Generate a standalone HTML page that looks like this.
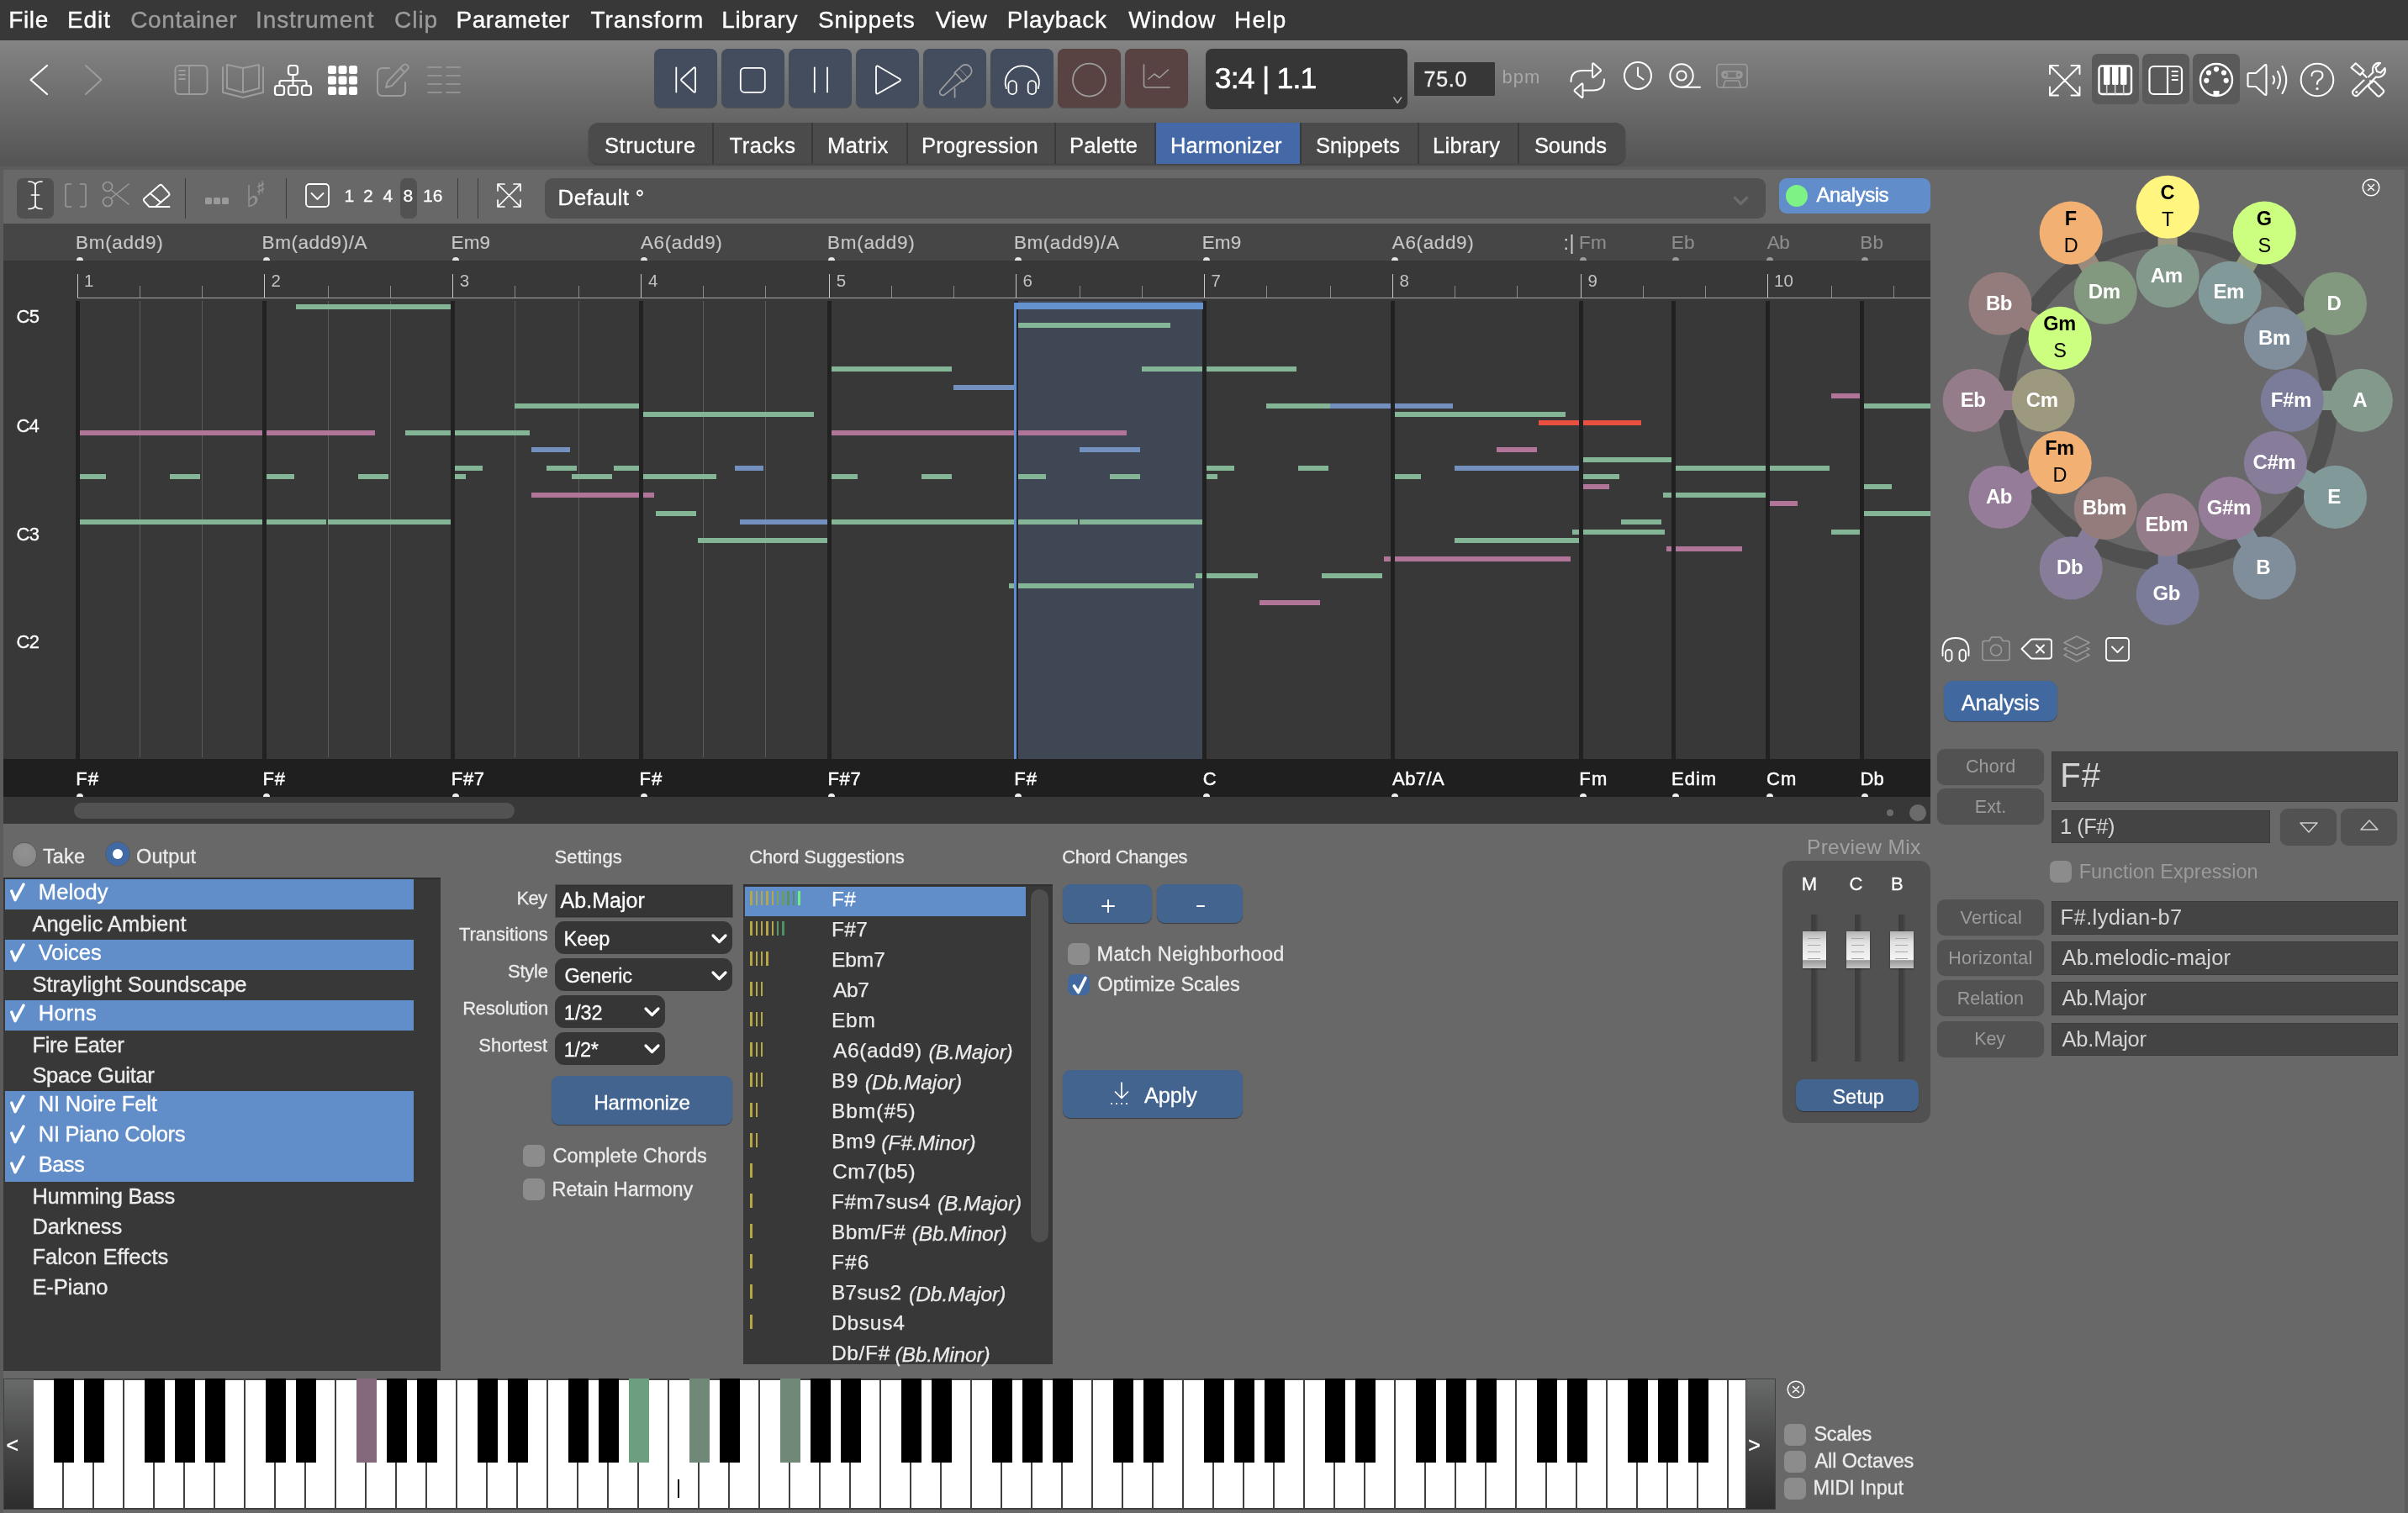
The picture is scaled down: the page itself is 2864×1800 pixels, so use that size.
<!DOCTYPE html>
<html><head><meta charset="utf-8"><title>Harmonizer</title>
<style>
html,body{margin:0;padding:0}
body{width:2864px;height:1800px;overflow:hidden;background:#686868;position:relative;font-family:"Liberation Sans",sans-serif}
.b{position:absolute;display:block}
.t{position:absolute;white-space:pre;line-height:1}
</style></head><body><div id="w" style="position:absolute;left:0;top:0;width:2864px;height:1800px;will-change:transform">
<div class="b" style="left:0.0px;top:0.0px;width:2864.0px;height:48.0px;background:#383838;"></div>
<span class="t" style="left:10.2px;top:10px;font-size:28px;color:#ffffff;letter-spacing:0.66px;-webkit-text-stroke:0.35px;">File</span>
<span class="t" style="left:80.0px;top:10px;font-size:28px;color:#ffffff;letter-spacing:0.91px;-webkit-text-stroke:0.35px;">Edit</span>
<span class="t" style="left:155.2px;top:10px;font-size:28px;color:#9b9b9b;letter-spacing:0.62px;-webkit-text-stroke:0.35px;">Container</span>
<span class="t" style="left:304.0px;top:10px;font-size:28px;color:#9b9b9b;letter-spacing:0.92px;-webkit-text-stroke:0.35px;">Instrument</span>
<span class="t" style="left:469.1px;top:10px;font-size:28px;color:#9b9b9b;letter-spacing:0.95px;-webkit-text-stroke:0.35px;">Clip</span>
<span class="t" style="left:542.6px;top:10px;font-size:28px;color:#ffffff;letter-spacing:0.50px;-webkit-text-stroke:0.35px;">Parameter</span>
<span class="t" style="left:702.4px;top:10px;font-size:28px;color:#ffffff;letter-spacing:0.93px;-webkit-text-stroke:0.35px;">Transform</span>
<span class="t" style="left:858.2px;top:10px;font-size:28px;color:#ffffff;letter-spacing:0.77px;-webkit-text-stroke:0.35px;">Library</span>
<span class="t" style="left:973.1px;top:10px;font-size:28px;color:#ffffff;letter-spacing:0.82px;-webkit-text-stroke:0.35px;">Snippets</span>
<span class="t" style="left:1112.7px;top:10px;font-size:28px;color:#ffffff;letter-spacing:0.25px;-webkit-text-stroke:0.35px;">View</span>
<span class="t" style="left:1197.8px;top:10px;font-size:28px;color:#ffffff;letter-spacing:0.64px;-webkit-text-stroke:0.35px;">Playback</span>
<span class="t" style="left:1342.3px;top:10px;font-size:28px;color:#ffffff;letter-spacing:0.68px;-webkit-text-stroke:0.35px;">Window</span>
<span class="t" style="left:1468.0px;top:10px;font-size:28px;color:#ffffff;letter-spacing:1.25px;-webkit-text-stroke:0.35px;">Help</span>
<div class="b" style="left:0.0px;top:48.0px;width:2864.0px;height:150.0px;background:linear-gradient(#848484,#7a7a7a 20%,#545454);"></div>
<div class="b" style="left:0.0px;top:198.0px;width:2864.0px;height:4.0px;background:#5c5c5c;"></div>
<svg class="b" style="left:30.0px;top:72.0px;" width="32" height="46" viewBox="0 0 32 46" fill="none" stroke-linecap="round" stroke-linejoin="round"><path d="M26 6 L6.500 23 L26 40" stroke="#ffffff" stroke-width="2.2"/></svg>
<svg class="b" style="left:96.0px;top:72.0px;" width="32" height="46" viewBox="0 0 32 46" fill="none" stroke-linecap="round" stroke-linejoin="round"><path d="M6 6 L24.500 23 L6 40" stroke="#9c9c9c" stroke-width="2"/></svg>
<svg class="b" style="left:206.0px;top:74.0px;" width="44" height="42" viewBox="0 0 44 42" fill="none" stroke-linecap="round" stroke-linejoin="round"><rect x="2.5" y="4" width="38" height="34" rx="5" stroke="#9c9c9c" stroke-width="2"/><path d="M19 4V38M7 10H14M7 15H14M7 20H14" stroke="#9c9c9c" stroke-width="1.8"/></svg>
<svg class="b" style="left:262.0px;top:72.0px;" width="54" height="46" viewBox="0 0 54 46" fill="none" stroke-linecap="round" stroke-linejoin="round"><path d="M8 5 L27 9 L46 5 V33 L27 38 L8 33 Z M27 9 V38" stroke="#9c9c9c" stroke-width="2"/><path d="M3 8 V38 L27 44 L51 38 V8" stroke="#9c9c9c" stroke-width="2"/></svg>
<svg class="b" style="left:324.0px;top:76.0px;" width="50" height="42" viewBox="0 0 50 42" fill="none" stroke-linecap="round" stroke-linejoin="round"><g stroke="#ffffff" stroke-width="2.2"><rect x="19" y="2" width="11" height="11" rx="3"/><rect x="3" y="26" width="11" height="11" rx="3"/><rect x="19" y="26" width="11" height="11" rx="3"/><rect x="35" y="26" width="11" height="11" rx="3"/><path d="M24.500 13V26M8.500 26V22Q8.500 20 10.500 20H38.500Q40.500 20 40.500 22V26"/></g></svg>
<svg class="b" style="left:389.0px;top:77.0px;" width="38" height="38" viewBox="0 0 38 38" fill="none" stroke-linecap="round" stroke-linejoin="round"><rect x="1.0" y="1.0" width="10" height="10" rx="2.5" fill="#ffffff"/><rect x="13.5" y="1.0" width="10" height="10" rx="2.5" fill="#ffffff"/><rect x="26.0" y="1.0" width="10" height="10" rx="2.5" fill="#ffffff"/><rect x="1.0" y="13.5" width="10" height="10" rx="2.5" fill="#ffffff"/><rect x="13.5" y="13.5" width="10" height="10" rx="2.5" fill="#ffffff"/><rect x="26.0" y="13.5" width="10" height="10" rx="2.5" fill="#ffffff"/><rect x="1.0" y="26.0" width="10" height="10" rx="2.5" fill="#ffffff"/><rect x="13.5" y="26.0" width="10" height="10" rx="2.5" fill="#ffffff"/><rect x="26.0" y="26.0" width="10" height="10" rx="2.5" fill="#ffffff"/></svg>
<svg class="b" style="left:446.0px;top:74.0px;" width="44" height="44" viewBox="0 0 44 44" fill="none" stroke-linecap="round" stroke-linejoin="round"><path d="M17 7H9Q3 7 3 13V34Q3 40 9 40H30Q36 40 36 34V24" stroke="#9c9c9c" stroke-width="2"/><path d="M13 30 L15 23 L33 4 Q36 1 39 4 Q41 7 38 9 L20 28 Z M30 7L35 12" stroke="#9c9c9c" stroke-width="2"/></svg>
<svg class="b" style="left:507.0px;top:77.0px;" width="42" height="36" viewBox="0 0 42 36" fill="none" stroke-linecap="round" stroke-linejoin="round"><path d="M2 3H18M24 3H40" stroke="#9c9c9c" stroke-width="1.6"/><path d="M2 13H18M24 13H40" stroke="#9c9c9c" stroke-width="1.6"/><path d="M2 23H18M24 23H40" stroke="#9c9c9c" stroke-width="1.6"/><path d="M2 33H18M24 33H40" stroke="#9c9c9c" stroke-width="1.6"/></svg>
<div class="b" style="left:778.3px;top:58.0px;width:74.5px;height:70.0px;background:#434d5e;border-radius:8px;box-shadow:0 1px 1px rgba(0,0,0,.25);"></div>
<div class="b" style="left:858.3px;top:58.0px;width:74.5px;height:70.0px;background:#434d5e;border-radius:8px;box-shadow:0 1px 1px rgba(0,0,0,.25);"></div>
<div class="b" style="left:938.3px;top:58.0px;width:74.5px;height:70.0px;background:#434d5e;border-radius:8px;box-shadow:0 1px 1px rgba(0,0,0,.25);"></div>
<div class="b" style="left:1018.3px;top:58.0px;width:74.5px;height:70.0px;background:#434d5e;border-radius:8px;box-shadow:0 1px 1px rgba(0,0,0,.25);"></div>
<div class="b" style="left:1098.3px;top:58.0px;width:74.5px;height:70.0px;background:#434d5e;border-radius:8px;box-shadow:0 1px 1px rgba(0,0,0,.25);"></div>
<div class="b" style="left:1178.3px;top:58.0px;width:74.5px;height:70.0px;background:#434d5e;border-radius:8px;box-shadow:0 1px 1px rgba(0,0,0,.25);"></div>
<div class="b" style="left:1258.3px;top:58.0px;width:74.5px;height:70.0px;background:#594342;border-radius:8px;box-shadow:0 1px 1px rgba(0,0,0,.25);"></div>
<div class="b" style="left:1338.3px;top:58.0px;width:74.5px;height:70.0px;background:#594342;border-radius:8px;box-shadow:0 1px 1px rgba(0,0,0,.25);"></div>
<svg class="b" style="left:778.3px;top:58.0px;" width="74.5" height="70" viewBox="0 0 74.5 70" fill="none" stroke-linecap="round" stroke-linejoin="round"><path d="M26.3 22.500V51.500" stroke="#ffffff" stroke-width="1.8"/><path d="M49 23.500V50.500Q49 52.500 47.300 51.500L32.500 38Q31.500 37 32.500 36L47.300 22.500Q49 21.500 49 23.500Z" stroke="#ffffff" stroke-width="1.8"/></svg>
<svg class="b" style="left:858.3px;top:58.0px;" width="74.5" height="70" viewBox="0 0 74.5 70" fill="none" stroke-linecap="round" stroke-linejoin="round"><rect x="22.800" y="22.800" width="29" height="29" rx="4.500" stroke="#ffffff" stroke-width="1.8"/></svg>
<svg class="b" style="left:938.3px;top:58.0px;" width="74.5" height="70" viewBox="0 0 74.5 70" fill="none" stroke-linecap="round" stroke-linejoin="round"><path d="M30.800 22.500V51.500M46 22.500V51.500" stroke="#ffffff" stroke-width="1.8"/></svg>
<svg class="b" style="left:1018.3px;top:58.0px;" width="74.5" height="70" viewBox="0 0 74.5 70" fill="none" stroke-linecap="round" stroke-linejoin="round"><path d="M24 22.500V51.500Q24 54.500 26.800 53L52 38.600Q54 37.200 52 35.800L26.800 21Q24 19.500 24 22.500Z" stroke="#ffffff" stroke-width="1.8"/></svg>
<svg class="b" style="left:1098.3px;top:58.0px;" width="74.5" height="70" viewBox="0 0 74.5 70" fill="none" stroke-linecap="round" stroke-linejoin="round"><g stroke="#9c9c9c" stroke-width="1.8"><path d="M20.8 49.1L37.4 30.5L37.5 28.4L45.7 20.7A7.3 7.3 0 0 1 55.7 31.3L47.5 39.0L45.4 38.9L25.7 54.4A3.6 3.6 0 0 1 20.8 49.1ZM37.5 28.4L47.5 39.0"/><path d="M43.4 23.9L52.3 33.4" stroke-width="0.9"/><path d="M37.600 47.500V57.700"/></g></svg>
<svg class="b" style="left:1178.3px;top:58.0px;" width="74.5" height="70" viewBox="0 0 74.5 70" fill="none" stroke-linecap="round" stroke-linejoin="round"><g stroke="#ffffff" stroke-width="1.8"><path d="M18.850 47.100A20.100 20.100 0 1 1 56.750 47.100"/><rect x="21.400" y="38.200" width="9.500" height="15.900" rx="4.700"/><rect x="44.700" y="38.200" width="9.500" height="15.900" rx="4.700"/></g></svg>
<svg class="b" style="left:1258.3px;top:58.0px;" width="74.5" height="70" viewBox="0 0 74.5 70" fill="none" stroke-linecap="round" stroke-linejoin="round"><circle cx="37.500" cy="37.200" r="19.500" stroke="#9c9c9c" stroke-width="1.8"/></svg>
<svg class="b" style="left:1338.3px;top:58.0px;" width="74.5" height="70" viewBox="0 0 74.5 70" fill="none" stroke-linecap="round" stroke-linejoin="round"><g stroke="#9c9c9c" stroke-width="1.6"><path d="M22.500 19V43Q22.500 46 25.500 46H53"/><path d="M28 36L35 30L41 34.500L51.500 25"/></g></svg>
<div class="b" style="left:1434.0px;top:58.0px;width:240.0px;height:72.0px;background:#363636;border-radius:8px;"></div>
<span class="t" style="left:1444.8px;top:76px;font-size:35.5px;color:#ffffff;letter-spacing:-0.77px;-webkit-text-stroke:0.6px;">3:4 | 1.1</span>
<svg class="b" style="left:1656.0px;top:114.0px;" width="12" height="10" viewBox="0 0 12 10" fill="none" stroke-linecap="round" stroke-linejoin="round"><path d="M1.800 2L6.200 8.500L10.600 2" stroke="#b4b4b4" stroke-width="1.5"/></svg>
<div class="b" style="left:1682.0px;top:74.0px;width:96.0px;height:39.6px;background:#373737;border-radius:1px;"></div>
<span class="t" style="left:1693.5px;top:82px;font-size:25px;color:#f0f0f0;letter-spacing:0.77px;-webkit-text-stroke:0.35px;">75.0</span>
<span class="t" style="left:1786.6px;top:81px;font-size:22px;color:#a8a8a8;letter-spacing:0.94px;">bpm</span>
<svg class="b" style="left:1864.0px;top:72.0px;" width="48" height="48" viewBox="0 0 48 48" fill="none" stroke-linecap="round" stroke-linejoin="round"><g stroke="#ffffff" stroke-width="2"><path d="M4.500 25Q4.500 12 18 12H29.500"/><path d="M30 4.500V19Q30 21 31.600 19.800L39.500 12.800Q40.500 11.800 39.500 10.800L31.600 3.800Q30 2.600 30 4.500Z"/><path d="M44 22.500Q44 35.500 30.500 35.500H19"/><path d="M18.500 28.500V43Q18.500 45 16.900 43.800L9 36.800Q8 35.800 9 34.800L16.900 27.800Q18.500 26.600 18.500 28.500Z"/></g></svg>
<svg class="b" style="left:1929.0px;top:71.0px;" width="38" height="38" viewBox="0 0 38 38" fill="none" stroke-linecap="round" stroke-linejoin="round"><g stroke="#ffffff" stroke-width="2"><circle cx="19" cy="19" r="16"/><path d="M19 9.500V19L25.500 23.500"/></g></svg>
<svg class="b" style="left:1983.0px;top:73.0px;" width="42" height="34" viewBox="0 0 42 34" fill="none" stroke-linecap="round" stroke-linejoin="round"><g stroke="#ffffff" stroke-width="2"><circle cx="17" cy="17" r="13.700"/><circle cx="17" cy="17" r="5.600"/><path d="M17 30.700H39"/></g></svg>
<svg class="b" style="left:2040.0px;top:74.0px;" width="40" height="32" viewBox="0 0 40 32" fill="none" stroke-linecap="round" stroke-linejoin="round"><g stroke="#9c9c9c" stroke-width="1.6"><rect x="2" y="2.500" width="36" height="27.500" rx="3.500"/><rect x="8" y="11" width="24" height="8" rx="4"/><circle cx="12" cy="15" r="2.500"/><circle cx="28" cy="15" r="2.500"/><path d="M9.500 30L11.500 23Q12 22 13 22H27Q28 22 28.500 23L30.500 30"/></g></svg>
<svg class="b" style="left:2436.0px;top:76.0px;" width="40" height="40" viewBox="0 0 40 40" fill="none" stroke-linecap="round" stroke-linejoin="round"><g stroke="#ffffff" stroke-width="1.9"><path d="M2 2L37.500 37.500M37.500 2L2 37.500M2 12V2H12M27.500 2H37.500V12M37.500 27.500V37.500H27.500M12 37.500H2V27.500"/></g></svg>
<div class="b" style="left:2488.0px;top:63.8px;width:56.0px;height:60.2px;background:#5a5a5a;border-radius:7px;"></div>
<div class="b" style="left:2547.9px;top:63.8px;width:56.0px;height:60.2px;background:#5a5a5a;border-radius:7px;"></div>
<div class="b" style="left:2607.8px;top:63.8px;width:56.0px;height:60.2px;background:#5a5a5a;border-radius:7px;"></div>
<svg class="b" style="left:2494.0px;top:76.0px;" width="44" height="38" viewBox="0 0 44 38" fill="none" stroke-linecap="round" stroke-linejoin="round"><rect x="2.500" y="2.500" width="38.500" height="33.500" rx="3.500" stroke="#ffffff" stroke-width="2.4"/><path d="M8 3H15.500V23.500Q15.500 25 14 25H9.500Q8 25 8 23.500ZM18 3H25.500V23.500Q25.500 25 24 25H19.500Q18 25 18 23.500ZM28 3H35.500V23.500Q35.500 25 34 25H29.500Q28 25 28 23.500Z" fill="#ffffff"/><path d="M11.700 25V36M21.700 25V36M31.700 25V36" stroke="#ccc" stroke-width="1.6"/></svg>
<svg class="b" style="left:2553.0px;top:76.0px;" width="46" height="38" viewBox="0 0 46 38" fill="none" stroke-linecap="round" stroke-linejoin="round"><g stroke="#ffffff" stroke-width="2.2"><rect x="3.500" y="3" width="38.500" height="33" rx="5"/><path d="M25 3V36"/><path d="M30.500 9H37M30.500 14H37M30.500 19H37" stroke-width="1.8"/></g></svg>
<svg class="b" style="left:2614.0px;top:73.0px;" width="44" height="44" viewBox="0 0 44 44" fill="none" stroke-linecap="round" stroke-linejoin="round"><circle cx="22" cy="22" r="19" stroke="#ffffff" stroke-width="2.400"/><circle cx="10.3" cy="22.8" r="3.100" fill="#ffffff"/><circle cx="13" cy="13.5" r="3.100" fill="#ffffff"/><circle cx="22" cy="9.3" r="3.100" fill="#ffffff"/><circle cx="31" cy="13.5" r="3.100" fill="#ffffff"/><circle cx="33.7" cy="22.8" r="3.100" fill="#ffffff"/><rect x="18.500" y="35" width="7" height="6" fill="#ffffff"/></svg>
<svg class="b" style="left:2669.0px;top:72.0px;" width="56" height="46" viewBox="0 0 56 46" fill="none" stroke-linecap="round" stroke-linejoin="round"><g stroke="#ffffff" stroke-width="2.1"><path d="M4.500 16.500Q4.500 15 6 15H14L24.500 5.500Q26.500 4 26.500 6.500V39.500Q26.500 42 24.500 40.500L14 31H6Q4.500 31 4.500 29.500Z"/><path d="M34.500 18.500Q37.500 23 34.500 27.500M40 13Q46 23 40 33M45.500 7Q55 23 45.500 39"/></g></svg>
<svg class="b" style="left:2734.0px;top:73.0px;" width="44" height="44" viewBox="0 0 44 44" fill="none" stroke-linecap="round" stroke-linejoin="round"><circle cx="22" cy="22" r="19.300" stroke="#ffffff" stroke-width="2"/><path d="M15.500 17Q15.500 11.500 22 11.500Q28.500 11.500 28.500 16.500Q28.500 20 24.500 22Q22 23.500 22 27" stroke="#ffffff" stroke-width="2"/><circle cx="22" cy="32.500" r="1.600" fill="#ffffff"/></svg>
<svg class="b" style="left:2793.0px;top:72.0px;" width="46" height="46" viewBox="0 0 46 46" fill="none" stroke-linecap="round" stroke-linejoin="round"><g stroke="#ffffff" stroke-width="2.100"><path d="M3.500 8.500L8.800 3.300L18.500 12L14 17.200Z"/><path d="M16.500 14.800L21.500 19.800M26 24.300L28 26.300"/><rect x="23.800" y="28.600" width="18.600" height="9.800" rx="2.600" transform="rotate(45 33.100 33.500)"/><path d="M24 19.500L29.500 14Q27.500 7 33.500 3.500Q35.500 2.500 38 3L32.500 8.500L34 13L38.500 14.500L43.500 9Q45 15 40 18.500Q36.500 20.500 33 19.500L12 40.500Q9.500 43.500 6.500 41Q3.500 38 6.500 35L18.500 23.500"/></g><circle cx="9.800" cy="37.400" r="1.500" fill="#ffffff"/></svg>
<div class="b" style="left:700.0px;top:146.0px;width:1232.5px;height:48.5px;background:#4b4b4b;border-radius:12px;box-shadow:0 1px 2px rgba(0,0,0,.3);"></div>
<div class="b" style="left:1374.0px;top:146.0px;width:172.5px;height:48.5px;background:#4469a6;"></div>
<div class="b" style="left:847.0px;top:146.0px;width:2.0px;height:48.5px;background:#3a3a3a;"></div>
<div class="b" style="left:965.0px;top:146.0px;width:2.0px;height:48.5px;background:#3a3a3a;"></div>
<div class="b" style="left:1077.5px;top:146.0px;width:2.0px;height:48.5px;background:#3a3a3a;"></div>
<div class="b" style="left:1253.6px;top:146.0px;width:2.0px;height:48.5px;background:#3a3a3a;"></div>
<div class="b" style="left:1373.0px;top:146.0px;width:2.0px;height:48.5px;background:#3a3a3a;"></div>
<div class="b" style="left:1545.5px;top:146.0px;width:2.0px;height:48.5px;background:#3a3a3a;"></div>
<div class="b" style="left:1685.6px;top:146.0px;width:2.0px;height:48.5px;background:#3a3a3a;"></div>
<div class="b" style="left:1805.4px;top:146.0px;width:2.0px;height:48.5px;background:#3a3a3a;"></div>
<span class="t" style="left:718.9px;top:161px;font-size:25.5px;color:#ffffff;letter-spacing:0.59px;-webkit-text-stroke:0.3px;">Structure</span>
<span class="t" style="left:867.5px;top:161px;font-size:25.5px;color:#ffffff;letter-spacing:0.57px;-webkit-text-stroke:0.3px;">Tracks</span>
<span class="t" style="left:984.0px;top:161px;font-size:25.5px;color:#ffffff;letter-spacing:0.57px;-webkit-text-stroke:0.3px;">Matrix</span>
<span class="t" style="left:1096.0px;top:161px;font-size:25.5px;color:#ffffff;letter-spacing:0.25px;-webkit-text-stroke:0.3px;">Progression</span>
<span class="t" style="left:1272.0px;top:161px;font-size:25.5px;color:#ffffff;letter-spacing:0.27px;-webkit-text-stroke:0.3px;">Palette</span>
<span class="t" style="left:1392.0px;top:161px;font-size:25.5px;color:#ffffff;letter-spacing:0.07px;-webkit-text-stroke:0.3px;">Harmonizer</span>
<span class="t" style="left:1564.9px;top:161px;font-size:25.5px;color:#ffffff;letter-spacing:0.11px;-webkit-text-stroke:0.3px;">Snippets</span>
<span class="t" style="left:1704.0px;top:161px;font-size:25.5px;color:#ffffff;letter-spacing:0.33px;-webkit-text-stroke:0.3px;">Library</span>
<span class="t" style="left:1824.9px;top:161px;font-size:25.5px;color:#ffffff;letter-spacing:-0.10px;-webkit-text-stroke:0.3px;">Sounds</span>
<div class="b" style="left:0.0px;top:202.0px;width:4.0px;height:1598.0px;background:#5c5c5c;"></div>
<div class="b" style="left:2860.0px;top:202.0px;width:4.0px;height:1598.0px;background:#5c5c5c;"></div>
<div class="b" style="left:19.7px;top:212.0px;width:44.5px;height:47.6px;background:#505050;border-radius:7px;"></div>
<svg class="b" style="left:26.0px;top:212.0px;" width="32" height="48" viewBox="0 0 32 48" fill="none" stroke-linecap="round" stroke-linejoin="round"><g stroke="#ffffff" stroke-width="1.7"><path d="M16 7.500V33M11.500 20H20.500"/><path d="M8 4Q15 4 16 8Q17 4 24 4M8 36.500Q15 36.500 16 32.500Q17 36.500 24 36.500"/></g></svg>
<svg class="b" style="left:76.0px;top:217.0px;" width="30" height="32" viewBox="0 0 30 32" fill="none" stroke-linecap="round" stroke-linejoin="round"><g stroke="#9a9a9a" stroke-width="1.6"><path d="M8.500 2H4Q2 2 2 4V27Q2 29 4 29H8.500M19.500 2H24Q26 2 26 4V27Q26 29 24 29H19.500"/></g></svg>
<svg class="b" style="left:120.0px;top:214.0px;" width="36" height="36" viewBox="0 0 36 36" fill="none" stroke-linecap="round" stroke-linejoin="round"><g stroke="#9a9a9a" stroke-width="1.6"><circle cx="8" cy="8" r="5.500"/><circle cx="8" cy="26" r="5.500"/><path d="M12 12L33 29M12 22L33 5"/></g></svg>
<svg class="b" style="left:168.0px;top:214.0px;" width="38" height="38" viewBox="0 0 38 38" fill="none" stroke-linecap="round" stroke-linejoin="round"><g stroke="#ffffff" stroke-width="1.9"><path d="M17 32H9.500L3.500 25.500Q2 23.500 3.700 22L21.500 6.500Q23.300 5 25 6.800L32.800 15.500Q34.300 17.300 32.600 18.800L17 32H33.500"/><path d="M10.500 16L23.500 27"/></g></svg>
<div class="b" style="left:220.0px;top:212.0px;width:1.0px;height:48.0px;background:#3c3c3c;"></div>
<div class="b" style="left:243.5px;top:234.5px;width:8.5px;height:8.0px;background:#9a9a9a;border-radius:1.5px;"></div>
<div class="b" style="left:253.5px;top:234.5px;width:8.5px;height:8.0px;background:#9a9a9a;border-radius:1.5px;"></div>
<div class="b" style="left:263.5px;top:234.5px;width:8.5px;height:8.0px;background:#9a9a9a;border-radius:1.5px;"></div>
<span class="t" style="left:292.500px;top:217px;font-size:35px;color:#929292;font-family:'DejaVu Sans',sans-serif;line-height:1;-webkit-text-stroke:0.5px">&#9837;</span>
<span class="t" style="left:304.500px;top:213px;font-size:23px;color:#929292;font-family:'DejaVu Sans',sans-serif;line-height:1;-webkit-text-stroke:0.4px">&#9839;</span>
<div class="b" style="left:340.0px;top:212.0px;width:1.0px;height:48.0px;background:#3c3c3c;"></div>
<svg class="b" style="left:362.0px;top:217.0px;" width="32" height="32" viewBox="0 0 32 32" fill="none" stroke-linecap="round" stroke-linejoin="round"><g stroke="#ffffff" stroke-width="1.8"><rect x="2" y="2" width="27" height="27" rx="4"/><path d="M8.500 13L15.500 20L22.500 13"/></g></svg>
<div class="b" style="left:476.0px;top:212.0px;width:20.0px;height:47.6px;background:#525252;border-radius:7px;"></div>
<span class="t" style="left:409.5px;top:222px;font-size:21px;color:#ffffff;-webkit-text-stroke:0.3px;">1</span>
<span class="t" style="left:432.0px;top:222px;font-size:21px;color:#ffffff;-webkit-text-stroke:0.3px;">2</span>
<span class="t" style="left:455.6px;top:222px;font-size:21px;color:#ffffff;-webkit-text-stroke:0.3px;">4</span>
<span class="t" style="left:479.6px;top:222px;font-size:21px;color:#ffffff;-webkit-text-stroke:0.3px;">8</span>
<span class="t" style="left:503.0px;top:222px;font-size:21px;color:#ffffff;letter-spacing:0.00px;-webkit-text-stroke:0.3px;">16</span>
<div class="b" style="left:544.0px;top:212.0px;width:1.0px;height:48.0px;background:#3c3c3c;"></div>
<div class="b" style="left:568.0px;top:212.0px;width:1.0px;height:48.0px;background:#3c3c3c;"></div>
<svg class="b" style="left:590.0px;top:217.0px;" width="32" height="32" viewBox="0 0 32 32" fill="none" stroke-linecap="round" stroke-linejoin="round"><g stroke="#ffffff" stroke-width="1.7"><path d="M2 2L29 29M29 2L2 29M2 10V2H10M21 2H29V10M29 21V29H21M10 29H2V21"/></g></svg>
<div class="b" style="left:648.0px;top:212.0px;width:1452.0px;height:47.6px;background:#515151;border-radius:9px;"></div>
<span class="t" style="left:663.6px;top:222px;font-size:26px;color:#ffffff;letter-spacing:0.33px;-webkit-text-stroke:0.35px;">Default °</span>
<svg class="b" style="left:2058.5px;top:231.0px;" width="24" height="16" viewBox="0 0 24 16" fill="none" stroke-linecap="round" stroke-linejoin="round"><path d="M3.500 3.500L11.500 11.500L19.500 3.500" stroke="#6c6c6c" stroke-width="3.300" stroke-linecap="butt" stroke-linejoin="miter"/></svg>
<div class="b" style="left:2116.0px;top:211.7px;width:180.0px;height:42.0px;background:#618dcb;border-radius:9px;"></div>
<div class="b" style="left:2124.4px;top:220.0px;width:26.0px;height:26.0px;background:#7ef385;border-radius:13px;"></div>
<span class="t" style="left:2160.4px;top:220px;font-size:24px;color:#ffffff;letter-spacing:-0.45px;-webkit-text-stroke:0.55px;">Analysis</span>
<div class="b" style="left:4.0px;top:266.0px;width:2292.0px;height:44.0px;background:#464646;"></div>
<div class="b" style="left:4.0px;top:310.0px;width:2292.0px;height:593.0px;background:#383838;"></div>
<div class="b" style="left:4.0px;top:903.0px;width:2292.0px;height:45.0px;background:#1f1f1f;"></div>
<div class="b" style="left:4.0px;top:948.0px;width:2292.0px;height:32.0px;background:#383838;"></div>
<div class="b" style="left:1208.0px;top:358.0px;width:224.0px;height:545.0px;background:#3f4654;"></div>
<div class="b" style="left:166.0px;top:358.0px;width:1.0px;height:543.0px;background:#5c5c5c;"></div>
<div class="b" style="left:240.0px;top:358.0px;width:1.0px;height:543.0px;background:#5c5c5c;"></div>
<div class="b" style="left:390.0px;top:358.0px;width:1.0px;height:543.0px;background:#5c5c5c;"></div>
<div class="b" style="left:464.0px;top:358.0px;width:1.0px;height:543.0px;background:#5c5c5c;"></div>
<div class="b" style="left:612.0px;top:358.0px;width:1.0px;height:543.0px;background:#5c5c5c;"></div>
<div class="b" style="left:688.0px;top:358.0px;width:1.0px;height:543.0px;background:#5c5c5c;"></div>
<div class="b" style="left:836.0px;top:358.0px;width:1.0px;height:543.0px;background:#5c5c5c;"></div>
<div class="b" style="left:910.0px;top:358.0px;width:1.0px;height:543.0px;background:#5c5c5c;"></div>
<div class="b" style="left:92.0px;top:354.0px;width:2204.0px;height:1.0px;background:#a9a9a9;"></div>
<div class="b" style="left:92.0px;top:326.0px;width:1.0px;height:28.0px;background:#c8c8c8;"></div>
<span class="t" style="left:100.0px;top:324px;font-size:20.5px;color:#c2c2c2;">1</span>
<div class="b" style="left:314.0px;top:326.0px;width:1.0px;height:28.0px;background:#c8c8c8;"></div>
<span class="t" style="left:322.5px;top:324px;font-size:20.5px;color:#c2c2c2;">2</span>
<div class="b" style="left:538.0px;top:326.0px;width:1.0px;height:28.0px;background:#c8c8c8;"></div>
<span class="t" style="left:546.8px;top:324px;font-size:20.5px;color:#c2c2c2;">3</span>
<div class="b" style="left:762.0px;top:326.0px;width:1.0px;height:28.0px;background:#c8c8c8;"></div>
<span class="t" style="left:771.1px;top:324px;font-size:20.5px;color:#c2c2c2;">4</span>
<div class="b" style="left:986.0px;top:326.0px;width:1.0px;height:28.0px;background:#c8c8c8;"></div>
<span class="t" style="left:994.8px;top:324px;font-size:20.5px;color:#c2c2c2;">5</span>
<div class="b" style="left:1208.0px;top:326.0px;width:1.0px;height:28.0px;background:#c8c8c8;"></div>
<span class="t" style="left:1216.5px;top:324px;font-size:20.5px;color:#c2c2c2;">6</span>
<div class="b" style="left:1432.0px;top:326.0px;width:1.0px;height:28.0px;background:#c8c8c8;"></div>
<span class="t" style="left:1440.5px;top:324px;font-size:20.5px;color:#c2c2c2;">7</span>
<div class="b" style="left:1656.0px;top:326.0px;width:1.0px;height:28.0px;background:#c8c8c8;"></div>
<span class="t" style="left:1664.6px;top:324px;font-size:20.5px;color:#c2c2c2;">8</span>
<div class="b" style="left:1880.0px;top:326.0px;width:1.0px;height:28.0px;background:#c8c8c8;"></div>
<span class="t" style="left:1888.6px;top:324px;font-size:20.5px;color:#c2c2c2;">9</span>
<div class="b" style="left:2102.0px;top:326.0px;width:1.0px;height:28.0px;background:#c8c8c8;"></div>
<span class="t" style="left:2110.0px;top:324px;font-size:20.5px;color:#c2c2c2;">10</span>
<div class="b" style="left:166.0px;top:340.0px;width:1.0px;height:14.0px;background:#8a8a8a;"></div>
<div class="b" style="left:240.0px;top:340.0px;width:1.0px;height:14.0px;background:#8a8a8a;"></div>
<div class="b" style="left:390.0px;top:340.0px;width:1.0px;height:14.0px;background:#8a8a8a;"></div>
<div class="b" style="left:464.0px;top:340.0px;width:1.0px;height:14.0px;background:#8a8a8a;"></div>
<div class="b" style="left:612.0px;top:340.0px;width:1.0px;height:14.0px;background:#8a8a8a;"></div>
<div class="b" style="left:688.0px;top:340.0px;width:1.0px;height:14.0px;background:#8a8a8a;"></div>
<div class="b" style="left:836.0px;top:340.0px;width:1.0px;height:14.0px;background:#8a8a8a;"></div>
<div class="b" style="left:910.0px;top:340.0px;width:1.0px;height:14.0px;background:#8a8a8a;"></div>
<div class="b" style="left:1060.0px;top:340.0px;width:1.0px;height:14.0px;background:#8a8a8a;"></div>
<div class="b" style="left:1134.0px;top:340.0px;width:1.0px;height:14.0px;background:#8a8a8a;"></div>
<div class="b" style="left:1284.0px;top:340.0px;width:1.0px;height:14.0px;background:#8a8a8a;"></div>
<div class="b" style="left:1358.0px;top:340.0px;width:1.0px;height:14.0px;background:#8a8a8a;"></div>
<div class="b" style="left:1506.0px;top:340.0px;width:1.0px;height:14.0px;background:#8a8a8a;"></div>
<div class="b" style="left:1582.0px;top:340.0px;width:1.0px;height:14.0px;background:#8a8a8a;"></div>
<div class="b" style="left:1730.0px;top:340.0px;width:1.0px;height:14.0px;background:#8a8a8a;"></div>
<div class="b" style="left:1804.0px;top:340.0px;width:1.0px;height:14.0px;background:#8a8a8a;"></div>
<div class="b" style="left:1954.0px;top:340.0px;width:1.0px;height:14.0px;background:#8a8a8a;"></div>
<div class="b" style="left:2028.0px;top:340.0px;width:1.0px;height:14.0px;background:#8a8a8a;"></div>
<div class="b" style="left:2178.0px;top:340.0px;width:1.0px;height:14.0px;background:#8a8a8a;"></div>
<div class="b" style="left:2252.0px;top:340.0px;width:1.0px;height:14.0px;background:#8a8a8a;"></div>
<div class="b" style="left:90.0px;top:358.0px;width:5.0px;height:545.0px;background:#212121;"></div>
<div class="b" style="left:312.0px;top:358.0px;width:5.0px;height:545.0px;background:#212121;"></div>
<div class="b" style="left:536.0px;top:358.0px;width:5.0px;height:545.0px;background:#212121;"></div>
<div class="b" style="left:760.0px;top:358.0px;width:5.0px;height:545.0px;background:#212121;"></div>
<div class="b" style="left:984.0px;top:358.0px;width:5.0px;height:545.0px;background:#212121;"></div>
<div class="b" style="left:1206.0px;top:358.0px;width:5.0px;height:545.0px;background:#212121;"></div>
<div class="b" style="left:1430.0px;top:358.0px;width:5.0px;height:545.0px;background:#212121;"></div>
<div class="b" style="left:1654.0px;top:358.0px;width:5.0px;height:545.0px;background:#212121;"></div>
<div class="b" style="left:1878.0px;top:358.0px;width:5.0px;height:545.0px;background:#212121;"></div>
<div class="b" style="left:2100.0px;top:358.0px;width:5.0px;height:545.0px;background:#212121;"></div>
<div class="b" style="left:1988.0px;top:358.0px;width:5.0px;height:545.0px;background:#212121;"></div>
<div class="b" style="left:2212.0px;top:358.0px;width:5.0px;height:545.0px;background:#212121;"></div>
<div class="b" style="left:1206.0px;top:359.5px;width:225.0px;height:8.5px;background:#6492cf;"></div>
<div class="b" style="left:1206.0px;top:359.5px;width:3.4px;height:543.5px;background:#5f8fd2;"></div>
<div class="b" style="left:352.0px;top:362.0px;width:184.0px;height:6.0px;background:#84b596;"></div>
<div class="b" style="left:612.0px;top:479.6px;width:148.0px;height:6.0px;background:#84b596;"></div>
<div class="b" style="left:765.0px;top:489.6px;width:203.0px;height:6.0px;background:#84b596;"></div>
<div class="b" style="left:95.0px;top:511.8px;width:216.6px;height:6.0px;background:#b07598;"></div>
<div class="b" style="left:317.0px;top:511.8px;width:129.0px;height:6.0px;background:#b07598;"></div>
<div class="b" style="left:482.0px;top:511.8px;width:54.0px;height:6.0px;background:#84b596;"></div>
<div class="b" style="left:541.0px;top:511.8px;width:89.0px;height:6.0px;background:#84b596;"></div>
<div class="b" style="left:632.0px;top:531.7px;width:46.0px;height:6.0px;background:#7490be;"></div>
<div class="b" style="left:541.0px;top:553.7px;width:33.0px;height:6.0px;background:#84b596;"></div>
<div class="b" style="left:650.0px;top:553.7px;width:36.0px;height:6.0px;background:#84b596;"></div>
<div class="b" style="left:730.0px;top:553.7px;width:30.0px;height:6.0px;background:#84b596;"></div>
<div class="b" style="left:95.0px;top:563.6px;width:31.0px;height:6.0px;background:#84b596;"></div>
<div class="b" style="left:202.0px;top:563.6px;width:36.0px;height:6.0px;background:#84b596;"></div>
<div class="b" style="left:317.0px;top:563.6px;width:33.0px;height:6.0px;background:#84b596;"></div>
<div class="b" style="left:426.0px;top:563.6px;width:36.0px;height:6.0px;background:#84b596;"></div>
<div class="b" style="left:541.0px;top:563.6px;width:13.0px;height:6.0px;background:#84b596;"></div>
<div class="b" style="left:680.0px;top:563.6px;width:48.0px;height:6.0px;background:#84b596;"></div>
<div class="b" style="left:632.0px;top:585.9px;width:128.0px;height:6.0px;background:#b07598;"></div>
<div class="b" style="left:765.0px;top:585.9px;width:13.0px;height:6.0px;background:#b07598;"></div>
<div class="b" style="left:780.0px;top:607.8px;width:48.0px;height:6.0px;background:#84b596;"></div>
<div class="b" style="left:95.0px;top:617.8px;width:216.6px;height:6.0px;background:#84b596;"></div>
<div class="b" style="left:317.0px;top:617.8px;width:70.7px;height:6.0px;background:#84b596;"></div>
<div class="b" style="left:390.0px;top:617.8px;width:146.0px;height:6.0px;background:#84b596;"></div>
<div class="b" style="left:989.0px;top:435.7px;width:143.0px;height:6.0px;background:#84b596;"></div>
<div class="b" style="left:1134.0px;top:457.7px;width:71.8px;height:6.0px;background:#7490be;"></div>
<div class="b" style="left:989.0px;top:511.8px;width:216.8px;height:6.0px;background:#b07598;"></div>
<div class="b" style="left:1211.0px;top:511.8px;width:129.0px;height:6.0px;background:#b07598;"></div>
<div class="b" style="left:1284.0px;top:531.7px;width:72.0px;height:6.0px;background:#7490be;"></div>
<div class="b" style="left:874.0px;top:553.7px;width:34.0px;height:6.0px;background:#7490be;"></div>
<div class="b" style="left:765.0px;top:563.6px;width:87.0px;height:6.0px;background:#84b596;"></div>
<div class="b" style="left:989.0px;top:563.6px;width:30.8px;height:6.0px;background:#84b596;"></div>
<div class="b" style="left:1096.0px;top:563.6px;width:36.0px;height:6.0px;background:#84b596;"></div>
<div class="b" style="left:1211.0px;top:563.6px;width:33.0px;height:6.0px;background:#84b596;"></div>
<div class="b" style="left:1320.0px;top:563.6px;width:36.0px;height:6.0px;background:#84b596;"></div>
<div class="b" style="left:1435.0px;top:553.7px;width:32.6px;height:6.0px;background:#84b596;"></div>
<div class="b" style="left:1435.0px;top:563.6px;width:12.7px;height:6.0px;background:#84b596;"></div>
<div class="b" style="left:880.0px;top:617.8px;width:104.0px;height:6.0px;background:#7490be;"></div>
<div class="b" style="left:989.0px;top:617.8px;width:216.8px;height:6.0px;background:#84b596;"></div>
<div class="b" style="left:1211.0px;top:617.8px;width:71.0px;height:6.0px;background:#84b596;"></div>
<div class="b" style="left:1284.0px;top:617.8px;width:145.7px;height:6.0px;background:#84b596;"></div>
<div class="b" style="left:830.0px;top:639.7px;width:154.0px;height:6.0px;background:#84b596;"></div>
<div class="b" style="left:1211.0px;top:384.0px;width:181.0px;height:6.0px;background:#84b596;"></div>
<div class="b" style="left:1358.0px;top:435.7px;width:71.7px;height:6.0px;background:#84b596;"></div>
<div class="b" style="left:1435.0px;top:435.7px;width:107.0px;height:6.0px;background:#84b596;"></div>
<div class="b" style="left:1200.0px;top:693.7px;width:6.0px;height:6.0px;background:#84b596;"></div>
<div class="b" style="left:1211.0px;top:693.7px;width:208.8px;height:6.0px;background:#84b596;"></div>
<div class="b" style="left:1422.0px;top:681.7px;width:7.7px;height:6.0px;background:#84b596;"></div>
<div class="b" style="left:1435.0px;top:681.7px;width:61.0px;height:6.0px;background:#84b596;"></div>
<div class="b" style="left:1498.0px;top:713.6px;width:71.8px;height:6.0px;background:#b07598;"></div>
<div class="b" style="left:1506.0px;top:479.6px;width:76.0px;height:6.0px;background:#84b596;"></div>
<div class="b" style="left:1582.0px;top:479.6px;width:71.8px;height:6.0px;background:#7490be;"></div>
<div class="b" style="left:1659.0px;top:479.6px;width:69.0px;height:6.0px;background:#7490be;"></div>
<div class="b" style="left:1659.0px;top:489.6px;width:202.8px;height:6.0px;background:#84b596;"></div>
<div class="b" style="left:1830.0px;top:499.9px;width:47.7px;height:6.0px;background:#ea5040;"></div>
<div class="b" style="left:1883.0px;top:499.9px;width:68.8px;height:6.0px;background:#ea5040;"></div>
<div class="b" style="left:1780.0px;top:531.7px;width:48.0px;height:6.0px;background:#b07598;"></div>
<div class="b" style="left:1883.0px;top:543.7px;width:104.7px;height:6.0px;background:#84b596;"></div>
<div class="b" style="left:1544.0px;top:553.7px;width:35.7px;height:6.0px;background:#84b596;"></div>
<div class="b" style="left:1730.0px;top:553.7px;width:147.7px;height:6.0px;background:#7490be;"></div>
<div class="b" style="left:1993.0px;top:553.7px;width:106.7px;height:6.0px;background:#84b596;"></div>
<div class="b" style="left:2105.0px;top:553.7px;width:70.7px;height:6.0px;background:#84b596;"></div>
<div class="b" style="left:1659.0px;top:563.6px;width:31.0px;height:6.0px;background:#84b596;"></div>
<div class="b" style="left:1883.0px;top:563.6px;width:43.0px;height:6.0px;background:#84b596;"></div>
<div class="b" style="left:1883.0px;top:576.0px;width:31.0px;height:6.0px;background:#b07598;"></div>
<div class="b" style="left:2217.0px;top:576.0px;width:33.0px;height:6.0px;background:#84b596;"></div>
<div class="b" style="left:1978.0px;top:585.9px;width:9.7px;height:6.0px;background:#84b596;"></div>
<div class="b" style="left:1993.0px;top:585.9px;width:106.7px;height:6.0px;background:#84b596;"></div>
<div class="b" style="left:2105.0px;top:595.9px;width:33.0px;height:6.0px;background:#b07598;"></div>
<div class="b" style="left:2217.0px;top:607.8px;width:79.0px;height:6.0px;background:#84b596;"></div>
<div class="b" style="left:1928.0px;top:617.8px;width:47.7px;height:6.0px;background:#84b596;"></div>
<div class="b" style="left:1870.0px;top:629.8px;width:7.7px;height:6.0px;background:#84b596;"></div>
<div class="b" style="left:1883.0px;top:629.8px;width:96.7px;height:6.0px;background:#84b596;"></div>
<div class="b" style="left:2178.0px;top:629.8px;width:34.0px;height:6.0px;background:#84b596;"></div>
<div class="b" style="left:1730.0px;top:639.7px;width:147.7px;height:6.0px;background:#84b596;"></div>
<div class="b" style="left:1982.0px;top:650.0px;width:5.7px;height:6.0px;background:#b07598;"></div>
<div class="b" style="left:1993.0px;top:650.0px;width:78.8px;height:6.0px;background:#b07598;"></div>
<div class="b" style="left:2178.0px;top:467.6px;width:34.0px;height:6.0px;background:#b07598;"></div>
<div class="b" style="left:2217.0px;top:479.6px;width:79.0px;height:6.0px;background:#84b596;"></div>
<div class="b" style="left:1646.0px;top:661.8px;width:7.8px;height:6.0px;background:#b07598;"></div>
<div class="b" style="left:1659.0px;top:661.8px;width:208.8px;height:6.0px;background:#b07598;"></div>
<div class="b" style="left:1572.0px;top:681.7px;width:71.9px;height:6.0px;background:#84b596;"></div>
<span class="t" style="left:19.5px;top:366px;font-size:22px;color:#ffffff;letter-spacing:-0.75px;-webkit-text-stroke:0.3px;">C5</span>
<span class="t" style="left:19.5px;top:496px;font-size:22px;color:#ffffff;letter-spacing:-1.00px;-webkit-text-stroke:0.3px;">C4</span>
<span class="t" style="left:19.5px;top:625px;font-size:22px;color:#ffffff;letter-spacing:-0.75px;-webkit-text-stroke:0.3px;">C3</span>
<span class="t" style="left:19.5px;top:753px;font-size:22px;color:#ffffff;letter-spacing:-0.62px;-webkit-text-stroke:0.3px;">C2</span>
<span class="t" style="left:90.0px;top:278px;font-size:22.5px;color:#c6c6c6;letter-spacing:0.69px;-webkit-text-stroke:0.2px;">Bm(add9)</span>
<div class="b" style="left:91.2px;top:306.4px;width:8.0px;height:3.6px;background:#e6e6e6;border-radius:4px 4px 0 0px;"></div>
<span class="t" style="left:311.6px;top:278px;font-size:22.5px;color:#c6c6c6;letter-spacing:0.54px;-webkit-text-stroke:0.2px;">Bm(add9)/A</span>
<div class="b" style="left:312.8px;top:306.4px;width:8.0px;height:3.6px;background:#e6e6e6;border-radius:4px 4px 0 0px;"></div>
<span class="t" style="left:536.5px;top:278px;font-size:22.5px;color:#c6c6c6;letter-spacing:0.17px;-webkit-text-stroke:0.2px;">Em9</span>
<div class="b" style="left:537.7px;top:306.4px;width:8.0px;height:3.6px;background:#e6e6e6;border-radius:4px 4px 0 0px;"></div>
<span class="t" style="left:762.0px;top:278px;font-size:22.5px;color:#c6c6c6;letter-spacing:0.61px;-webkit-text-stroke:0.2px;">A6(add9)</span>
<div class="b" style="left:761.5px;top:306.4px;width:8.0px;height:3.6px;background:#e6e6e6;border-radius:4px 4px 0 0px;"></div>
<span class="t" style="left:984.1px;top:278px;font-size:22.5px;color:#c6c6c6;letter-spacing:0.69px;-webkit-text-stroke:0.2px;">Bm(add9)</span>
<div class="b" style="left:985.4px;top:306.4px;width:8.0px;height:3.6px;background:#e6e6e6;border-radius:4px 4px 0 0px;"></div>
<span class="t" style="left:1206.0px;top:278px;font-size:22.5px;color:#c6c6c6;letter-spacing:0.54px;-webkit-text-stroke:0.2px;">Bm(add9)/A</span>
<div class="b" style="left:1207.3px;top:306.4px;width:8.0px;height:3.6px;background:#e6e6e6;border-radius:4px 4px 0 0px;"></div>
<span class="t" style="left:1429.7px;top:278px;font-size:22.5px;color:#c6c6c6;letter-spacing:0.17px;-webkit-text-stroke:0.2px;">Em9</span>
<div class="b" style="left:1430.9px;top:306.4px;width:8.0px;height:3.6px;background:#e6e6e6;border-radius:4px 4px 0 0px;"></div>
<span class="t" style="left:1655.8px;top:278px;font-size:22.5px;color:#c6c6c6;letter-spacing:0.61px;-webkit-text-stroke:0.2px;">A6(add9)</span>
<div class="b" style="left:1655.3px;top:306.4px;width:8.0px;height:3.6px;background:#e6e6e6;border-radius:4px 4px 0 0px;"></div>
<span class="t" style="left:1878.0px;top:278px;font-size:22.5px;color:#8c8c8c;letter-spacing:0.18px;-webkit-text-stroke:0.2px;">Fm</span>
<div class="b" style="left:1879.2px;top:306.4px;width:8.0px;height:3.6px;background:#9c9c9c;border-radius:4px 4px 0 0px;"></div>
<span class="t" style="left:1987.7px;top:278px;font-size:22.5px;color:#8c8c8c;letter-spacing:0.34px;-webkit-text-stroke:0.2px;">Eb</span>
<div class="b" style="left:1988.9px;top:306.4px;width:8.0px;height:3.6px;background:#9c9c9c;border-radius:4px 4px 0 0px;"></div>
<span class="t" style="left:2101.7px;top:278px;font-size:22.5px;color:#8c8c8c;letter-spacing:-0.52px;-webkit-text-stroke:0.2px;">Ab</span>
<div class="b" style="left:2101.2px;top:306.4px;width:8.0px;height:3.6px;background:#9c9c9c;border-radius:4px 4px 0 0px;"></div>
<span class="t" style="left:2212.2px;top:278px;font-size:22.5px;color:#8c8c8c;letter-spacing:0.34px;-webkit-text-stroke:0.2px;">Bb</span>
<div class="b" style="left:2213.5px;top:306.4px;width:8.0px;height:3.6px;background:#9c9c9c;border-radius:4px 4px 0 0px;"></div>
<span class="t" style="left:1859.5px;top:278px;font-size:23px;color:#d0d0d0;letter-spacing:0.62px;">:|</span>
<span class="t" style="left:90.2px;top:916px;font-size:22px;color:#ffffff;letter-spacing:1.00px;-webkit-text-stroke:0.45px;">F#</span>
<div class="b" style="left:91.2px;top:944.4px;width:8.0px;height:3.6px;background:#f0f0f0;border-radius:4px 4px 0 0px;"></div>
<span class="t" style="left:312.4px;top:916px;font-size:22px;color:#ffffff;letter-spacing:1.00px;-webkit-text-stroke:0.45px;">F#</span>
<div class="b" style="left:313.3px;top:944.4px;width:8.0px;height:3.6px;background:#f0f0f0;border-radius:4px 4px 0 0px;"></div>
<span class="t" style="left:536.8px;top:916px;font-size:22px;color:#ffffff;letter-spacing:0.69px;-webkit-text-stroke:0.45px;">F#7</span>
<div class="b" style="left:537.7px;top:944.4px;width:8.0px;height:3.6px;background:#f0f0f0;border-radius:4px 4px 0 0px;"></div>
<span class="t" style="left:760.5px;top:916px;font-size:22px;color:#ffffff;letter-spacing:1.00px;-webkit-text-stroke:0.45px;">F#</span>
<div class="b" style="left:761.5px;top:944.4px;width:8.0px;height:3.6px;background:#f0f0f0;border-radius:4px 4px 0 0px;"></div>
<span class="t" style="left:984.4px;top:916px;font-size:22px;color:#ffffff;letter-spacing:0.69px;-webkit-text-stroke:0.45px;">F#7</span>
<div class="b" style="left:985.4px;top:944.4px;width:8.0px;height:3.6px;background:#f0f0f0;border-radius:4px 4px 0 0px;"></div>
<span class="t" style="left:1206.3px;top:916px;font-size:22px;color:#ffffff;letter-spacing:1.00px;-webkit-text-stroke:0.45px;">F#</span>
<div class="b" style="left:1207.3px;top:944.4px;width:8.0px;height:3.6px;background:#f0f0f0;border-radius:4px 4px 0 0px;"></div>
<span class="t" style="left:1430.7px;top:916px;font-size:22px;color:#ffffff;-webkit-text-stroke:0.45px;">C</span>
<div class="b" style="left:1430.9px;top:944.4px;width:8.0px;height:3.6px;background:#f0f0f0;border-radius:4px 4px 0 0px;"></div>
<span class="t" style="left:1656.1px;top:916px;font-size:22px;color:#ffffff;letter-spacing:0.41px;-webkit-text-stroke:0.45px;">Ab7/A</span>
<div class="b" style="left:1655.3px;top:944.4px;width:8.0px;height:3.6px;background:#f0f0f0;border-radius:4px 4px 0 0px;"></div>
<span class="t" style="left:1878.2px;top:916px;font-size:22px;color:#ffffff;letter-spacing:1.25px;-webkit-text-stroke:0.45px;">Fm</span>
<div class="b" style="left:1879.2px;top:944.4px;width:8.0px;height:3.6px;background:#f0f0f0;border-radius:4px 4px 0 0px;"></div>
<span class="t" style="left:1988.0px;top:916px;font-size:22px;color:#ffffff;letter-spacing:1.00px;-webkit-text-stroke:0.45px;">Edim</span>
<div class="b" style="left:1988.9px;top:944.4px;width:8.0px;height:3.6px;background:#f0f0f0;border-radius:4px 4px 0 0px;"></div>
<span class="t" style="left:2101.0px;top:916px;font-size:22px;color:#ffffff;letter-spacing:1.12px;-webkit-text-stroke:0.45px;">Cm</span>
<div class="b" style="left:2101.2px;top:944.4px;width:8.0px;height:3.6px;background:#f0f0f0;border-radius:4px 4px 0 0px;"></div>
<span class="t" style="left:2212.6px;top:916px;font-size:22px;color:#ffffff;letter-spacing:0.00px;-webkit-text-stroke:0.45px;">Db</span>
<div class="b" style="left:2213.5px;top:944.4px;width:8.0px;height:3.6px;background:#f0f0f0;border-radius:4px 4px 0 0px;"></div>
<div class="b" style="left:88.0px;top:954.5px;width:524.0px;height:19.5px;background:#525252;border-radius:10px;"></div>
<div class="b" style="left:2244.0px;top:962.5px;width:8.0px;height:8.0px;background:#6b6b6b;border-radius:4px;"></div>
<div class="b" style="left:2270.5px;top:956.5px;width:20.0px;height:20.0px;background:#6b6b6b;border-radius:10px;"></div>
<svg class="b" style="left:0;top:0" width="2864" height="800" viewBox="0 0 2864 800" font-family="Liberation Sans, sans-serif"><circle cx="2578.25" cy="476.4" r="192" stroke="#505050" stroke-width="20.8" fill="none"/><path d="M2578.2 246.3L2578.2 328.4" stroke="#9c997f" stroke-width="23.2" stroke-linecap="butt"/><path d="M2693.3 277.1L2652.2 348.2" stroke="#8f997d" stroke-width="23.2" stroke-linecap="butt"/><path d="M2777.5 361.3L2706.4 402.4" stroke="#82997f" stroke-width="23.2" stroke-linecap="butt"/><path d="M2808.3 476.4L2726.2 476.4" stroke="#82998b" stroke-width="23.2" stroke-linecap="butt"/><path d="M2777.5 591.4L2706.4 550.4" stroke="#82999a" stroke-width="23.2" stroke-linecap="butt"/><path d="M2693.3 675.7L2652.2 604.6" stroke="#808e9c" stroke-width="23.2" stroke-linecap="butt"/><path d="M2578.2 706.5L2578.2 624.4" stroke="#7b7b9a" stroke-width="23.2" stroke-linecap="butt"/><path d="M2463.2 675.7L2504.2 604.6" stroke="#877c99" stroke-width="23.2" stroke-linecap="butt"/><path d="M2379.0 591.5L2450.1 550.4" stroke="#957c99" stroke-width="23.2" stroke-linecap="butt"/><path d="M2348.2 476.4L2430.2 476.4" stroke="#957c8a" stroke-width="23.2" stroke-linecap="butt"/><path d="M2379.0 361.3L2450.1 402.4" stroke="#957c7c" stroke-width="23.2" stroke-linecap="butt"/><path d="M2463.2 277.1L2504.2 348.2" stroke="#9a8a7b" stroke-width="23.2" stroke-linecap="butt"/><circle cx="2578.2" cy="246.3" r="37.55" fill="#fff57f"/><circle cx="2578.2" cy="328.4" r="37.55" fill="#82998b"/><circle cx="2693.3" cy="277.1" r="37.55" fill="#ccff7f"/><circle cx="2652.2" cy="348.2" r="37.55" fill="#82999a"/><circle cx="2777.5" cy="361.3" r="37.55" fill="#82997f"/><circle cx="2706.4" cy="402.4" r="37.55" fill="#808e9c"/><circle cx="2808.3" cy="476.4" r="37.55" fill="#82998b"/><circle cx="2726.2" cy="476.4" r="37.55" fill="#7b7b9a"/><circle cx="2777.5" cy="591.4" r="37.55" fill="#82999a"/><circle cx="2706.4" cy="550.4" r="37.55" fill="#877c99"/><circle cx="2693.3" cy="675.7" r="37.55" fill="#808e9c"/><circle cx="2652.2" cy="604.6" r="37.55" fill="#957c99"/><circle cx="2578.2" cy="706.5" r="37.55" fill="#7b7b9a"/><circle cx="2578.2" cy="624.4" r="37.55" fill="#957c8a"/><circle cx="2463.2" cy="675.7" r="37.55" fill="#877c99"/><circle cx="2504.2" cy="604.6" r="37.55" fill="#957c7c"/><circle cx="2379.0" cy="591.5" r="37.55" fill="#957c99"/><circle cx="2450.1" cy="550.4" r="37.55" fill="#f3b073"/><circle cx="2348.2" cy="476.4" r="37.55" fill="#957c8a"/><circle cx="2430.2" cy="476.4" r="37.55" fill="#9c997f"/><circle cx="2379.0" cy="361.3" r="37.55" fill="#957c7c"/><circle cx="2450.1" cy="402.4" r="37.55" fill="#ccff7f"/><circle cx="2463.2" cy="277.1" r="37.55" fill="#f3b073"/><circle cx="2504.2" cy="348.2" r="37.55" fill="#82997f"/><text x="2577.8" y="237.2" font-size="23.5" font-weight="bold" fill="#000" text-anchor="middle" letter-spacing="-0.3">C</text><text x="2578.2"  y="268.9" font-size="23.5" fill="#000" text-anchor="middle">T</text><text x="2576.8" y="335.6" font-size="24" font-weight="bold" fill="#fff" text-anchor="middle" letter-spacing="-0.4">Am</text><text x="2692.8" y="268.0" font-size="23.5" font-weight="bold" fill="#000" text-anchor="middle" letter-spacing="-0.3">G</text><text x="2693.3"  y="299.7" font-size="23.5" fill="#000" text-anchor="middle">S</text><text x="2650.8" y="355.4" font-size="24" font-weight="bold" fill="#fff" text-anchor="middle" letter-spacing="-0.4">Em</text><text x="2776.0" y="368.5" font-size="24" font-weight="bold" fill="#fff" text-anchor="middle" letter-spacing="-0.4">D</text><text x="2704.9" y="409.6" font-size="24" font-weight="bold" fill="#fff" text-anchor="middle" letter-spacing="-0.4">Bm</text><text x="2806.8" y="483.6" font-size="24" font-weight="bold" fill="#fff" text-anchor="middle" letter-spacing="-0.4">A</text><text x="2724.8" y="483.6" font-size="24" font-weight="bold" fill="#fff" text-anchor="middle" letter-spacing="-0.4">F#m</text><text x="2776.0" y="598.6" font-size="24" font-weight="bold" fill="#fff" text-anchor="middle" letter-spacing="-0.4">E</text><text x="2704.9" y="557.6" font-size="24" font-weight="bold" fill="#fff" text-anchor="middle" letter-spacing="-0.4">C#m</text><text x="2691.8" y="682.9" font-size="24" font-weight="bold" fill="#fff" text-anchor="middle" letter-spacing="-0.4">B</text><text x="2650.8" y="611.8" font-size="24" font-weight="bold" fill="#fff" text-anchor="middle" letter-spacing="-0.4">G#m</text><text x="2576.8" y="713.7" font-size="24" font-weight="bold" fill="#fff" text-anchor="middle" letter-spacing="-0.4">Gb</text><text x="2576.8" y="631.6" font-size="24" font-weight="bold" fill="#fff" text-anchor="middle" letter-spacing="-0.4">Ebm</text><text x="2461.7" y="682.9" font-size="24" font-weight="bold" fill="#fff" text-anchor="middle" letter-spacing="-0.4">Db</text><text x="2502.8" y="611.8" font-size="24" font-weight="bold" fill="#fff" text-anchor="middle" letter-spacing="-0.4">Bbm</text><text x="2377.5" y="598.7" font-size="24" font-weight="bold" fill="#fff" text-anchor="middle" letter-spacing="-0.4">Ab</text><text x="2449.6" y="541.3" font-size="23.5" font-weight="bold" fill="#000" text-anchor="middle" letter-spacing="-0.3">Fm</text><text x="2450.1"  y="573.0" font-size="23.5" fill="#000" text-anchor="middle">D</text><text x="2346.7" y="483.6" font-size="24" font-weight="bold" fill="#fff" text-anchor="middle" letter-spacing="-0.4">Eb</text><text x="2428.8" y="483.6" font-size="24" font-weight="bold" fill="#fff" text-anchor="middle" letter-spacing="-0.4">Cm</text><text x="2377.5" y="368.5" font-size="24" font-weight="bold" fill="#fff" text-anchor="middle" letter-spacing="-0.4">Bb</text><text x="2449.6" y="393.3" font-size="23.5" font-weight="bold" fill="#000" text-anchor="middle" letter-spacing="-0.3">Gm</text><text x="2450.1"  y="425.0" font-size="23.5" fill="#000" text-anchor="middle">S</text><text x="2462.7" y="268.0" font-size="23.5" font-weight="bold" fill="#000" text-anchor="middle" letter-spacing="-0.3">F</text><text x="2463.2"  y="299.7" font-size="23.5" fill="#000" text-anchor="middle">D</text><text x="2502.8" y="355.4" font-size="24" font-weight="bold" fill="#fff" text-anchor="middle" letter-spacing="-0.4">Dm</text></svg>
<svg class="b" style="left:2808.0px;top:211.0px;" width="24" height="24" viewBox="0 0 24 24" fill="none" stroke-linecap="round" stroke-linejoin="round"><circle cx="12" cy="12" r="9.800" stroke="#ffffff" stroke-width="1.5"/><path d="M8.500 8.500L15.500 15.500M15.500 8.500L8.500 15.500" stroke="#ffffff" stroke-width="1.5"/></svg>
<svg class="b" style="left:2307.0px;top:756.0px;" width="38" height="34" viewBox="0 0 38 34" fill="none" stroke-linecap="round" stroke-linejoin="round"><g stroke="#ffffff" stroke-width="1.9"><path d="M3.500 24V18Q3.500 3 19 3Q34.500 3 34.500 18V24"/><rect x="7" y="17" width="7.500" height="13.500" rx="3.700"/><rect x="23.500" y="17" width="7.500" height="13.500" rx="3.700"/></g></svg>
<svg class="b" style="left:2356.0px;top:756.0px;" width="36" height="32" viewBox="0 0 36 32" fill="none" stroke-linecap="round" stroke-linejoin="round"><g stroke="#9a9a9a" stroke-width="1.6"><path d="M2 9Q2 6.500 4.500 6.500H10L12 3Q12.500 2 13.500 2H22.500Q23.500 2 24 3L26 6.500H31.500Q34 6.500 34 9V27Q34 29.500 31.500 29.500H4.500Q2 29.500 2 27Z"/><circle cx="18" cy="17.500" r="6.500"/></g></svg>
<svg class="b" style="left:2402.0px;top:758.0px;" width="42" height="28" viewBox="0 0 42 28" fill="none" stroke-linecap="round" stroke-linejoin="round"><g stroke="#ffffff" stroke-width="1.9"><path d="M2.500 14L13 3.500Q14 2.500 15.500 2.500H35Q38 2.500 38 5.500V22.500Q38 25.500 35 25.500H15.500Q14 25.500 13 24.500Z"/><path d="M20 9.500L29 18.500M29 9.500L20 18.500"/></g></svg>
<svg class="b" style="left:2452.0px;top:755.0px;" width="36" height="36" viewBox="0 0 36 36" fill="none" stroke-linecap="round" stroke-linejoin="round"><g stroke="#9a9a9a" stroke-width="1.5"><path d="M18 2L33 9.500L18 17L3 9.500Z"/><path d="M6 15.500L3 17L18 24.500L33 17L30 15.500"/><path d="M6 23L3 24.500L18 32L33 24.500L30 23"/></g></svg>
<svg class="b" style="left:2503.0px;top:757.0px;" width="32" height="32" viewBox="0 0 32 32" fill="none" stroke-linecap="round" stroke-linejoin="round"><g stroke="#ffffff" stroke-width="1.8"><rect x="2" y="2" width="27" height="27" rx="3.500"/><path d="M9 12.500L15.500 19L22 12.500"/></g></svg>
<div class="b" style="left:2312.0px;top:810.3px;width:134.5px;height:48.0px;background:#41699f;border-radius:11px;box-shadow:0 1px 1px rgba(0,0,0,.35);"></div>
<span class="t" style="left:2332.8px;top:824px;font-size:25.5px;color:#ffffff;letter-spacing:-0.30px;-webkit-text-stroke:0.3px;">Analysis</span>
<div class="b" style="left:2304.2px;top:890.5px;width:126.4px;height:42.0px;background:#525252;border-radius:9px;box-shadow:0 1px 1px rgba(0,0,0,.25);"></div>
<span class="t" style="left:2337.9px;top:902px;font-size:21.5px;color:#9c9c9c;letter-spacing:0.19px;">Chord</span>
<div class="b" style="left:2304.2px;top:938.4px;width:126.4px;height:42.0px;background:#525252;border-radius:9px;box-shadow:0 1px 1px rgba(0,0,0,.25);"></div>
<span class="t" style="left:2348.7px;top:950px;font-size:21.5px;color:#9c9c9c;letter-spacing:0.17px;">Ext.</span>
<div class="b" style="left:2440.2px;top:894.2px;width:411.5px;height:59.4px;background:#444444;box-shadow:0 0 0 1px #3b3b3b inset;"></div>
<span class="t" style="left:2450.2px;top:902px;font-size:40px;color:#d4d4d4;letter-spacing:1.25px;">F#</span>
<div class="b" style="left:2440.2px;top:964.3px;width:259.7px;height:39.2px;background:#444444;box-shadow:0 0 0 1px #3b3b3b inset;"></div>
<span class="t" style="left:2450.1px;top:971px;font-size:25.5px;color:#d4d4d4;letter-spacing:-0.53px;">1 (F#)</span>
<div class="b" style="left:2712.0px;top:962.0px;width:66.6px;height:42.7px;background:#525252;border-radius:9px;box-shadow:0 1px 1px rgba(0,0,0,.25);"></div>
<div class="b" style="left:2784.0px;top:962.0px;width:66.8px;height:42.7px;background:#525252;border-radius:9px;box-shadow:0 1px 1px rgba(0,0,0,.25);"></div>
<svg class="b" style="left:2733.0px;top:976.0px;" width="26" height="18" viewBox="0 0 26 18" fill="none" stroke-linecap="round" stroke-linejoin="round"><path d="M3 3H23L13 14Z" stroke="#cfcfcf" stroke-width="1.5"/></svg>
<svg class="b" style="left:2805.0px;top:972.0px;" width="26" height="18" viewBox="0 0 26 18" fill="none" stroke-linecap="round" stroke-linejoin="round"><path d="M3 15H23L13 4Z" stroke="#cfcfcf" stroke-width="1.5"/></svg>
<div class="b" style="left:2438.0px;top:1024.0px;width:26.0px;height:26.0px;background:#8c8c8c;border-radius:7px;"></div>
<span class="t" style="left:2472.7px;top:1026px;font-size:23.5px;color:#9b9b9b;letter-spacing:-0.00px;">Function Expression</span>
<div class="b" style="left:2304.2px;top:1070.2px;width:126.4px;height:42.0px;background:#525252;border-radius:9px;box-shadow:0 1px 1px rgba(0,0,0,.25);"></div>
<span class="t" style="left:2331.4px;top:1082px;font-size:21.5px;color:#9c9c9c;letter-spacing:0.41px;">Vertical</span>
<div class="b" style="left:2440.2px;top:1072.2px;width:411.5px;height:39.4px;background:#444444;box-shadow:0 0 0 1px #3b3b3b inset;"></div>
<span class="t" style="left:2450.6px;top:1079px;font-size:25.5px;color:#d4d4d4;letter-spacing:0.39px;">F#.lydian-b7</span>
<div class="b" style="left:2304.2px;top:1118.3px;width:126.4px;height:42.0px;background:#525252;border-radius:9px;box-shadow:0 1px 1px rgba(0,0,0,.25);"></div>
<span class="t" style="left:2317.2px;top:1130px;font-size:21.5px;color:#9c9c9c;letter-spacing:0.38px;">Horizontal</span>
<div class="b" style="left:2440.2px;top:1120.3px;width:411.5px;height:39.4px;background:#444444;box-shadow:0 0 0 1px #3b3b3b inset;"></div>
<span class="t" style="left:2452.6px;top:1127px;font-size:25.5px;color:#d4d4d4;letter-spacing:0.13px;">Ab.melodic-major</span>
<div class="b" style="left:2304.2px;top:1166.4px;width:126.4px;height:42.0px;background:#525252;border-radius:9px;box-shadow:0 1px 1px rgba(0,0,0,.25);"></div>
<span class="t" style="left:2327.7px;top:1178px;font-size:21.5px;color:#9c9c9c;letter-spacing:0.04px;">Relation</span>
<div class="b" style="left:2440.2px;top:1168.4px;width:411.5px;height:39.4px;background:#444444;box-shadow:0 0 0 1px #3b3b3b inset;"></div>
<span class="t" style="left:2452.6px;top:1175px;font-size:25.5px;color:#d4d4d4;letter-spacing:-0.23px;">Ab.Major</span>
<div class="b" style="left:2304.2px;top:1214.5px;width:126.4px;height:42.0px;background:#525252;border-radius:9px;box-shadow:0 1px 1px rgba(0,0,0,.25);"></div>
<span class="t" style="left:2348.2px;top:1226px;font-size:21.5px;color:#9c9c9c;letter-spacing:-0.12px;">Key</span>
<div class="b" style="left:2440.2px;top:1216.5px;width:411.5px;height:39.4px;background:#444444;box-shadow:0 0 0 1px #3b3b3b inset;"></div>
<span class="t" style="left:2452.6px;top:1224px;font-size:25.5px;color:#d4d4d4;letter-spacing:-0.23px;">Ab.Major</span>
<div class="b" style="left:15.0px;top:1003.0px;width:28.0px;height:28.0px;background:radial-gradient(circle at 50% 35%,#929292,#868686);border-radius:14px;box-shadow:0 0 0 1px rgba(0,0,0,.12);"></div>
<div class="b" style="left:126.3px;top:1002.4px;width:28.0px;height:28.0px;background:#4169a4;border-radius:14px;box-shadow:0 0 0 1px rgba(0,0,0,.12);"></div>
<div class="b" style="left:134.3px;top:1010.4px;width:12.0px;height:12.0px;background:#ffffff;border-radius:6px;"></div>
<span class="t" style="left:50.9px;top:1008px;font-size:23.5px;color:#ececec;letter-spacing:0.15px;-webkit-text-stroke:0.3px;">Take</span>
<span class="t" style="left:162.0px;top:1008px;font-size:23.5px;color:#ececec;letter-spacing:0.12px;-webkit-text-stroke:0.3px;">Output</span>
<div class="b" style="left:4.0px;top:1044.0px;width:520.0px;height:587.0px;background:#383838;box-shadow:0 2px 0 #2f2f2f inset;"></div>
<div class="b" style="left:6.0px;top:1046.0px;width:486.0px;height:36.0px;background:#618dc9;"></div>
<svg class="b" style="left:11.0px;top:1049.5px;" width="22" height="24" viewBox="0 0 22 24" fill="none" stroke-linecap="round" stroke-linejoin="round"><path d="M2.800 10.100L7 20.700L17 2.200" stroke="#fff" stroke-width="3.500" stroke-linecap="round" stroke-linejoin="round" fill="none"/></svg>
<span class="t" style="left:45.8px;top:1049px;font-size:25.5px;color:#ffffff;letter-spacing:0.09px;-webkit-text-stroke:0.35px;">Melody</span>
<span class="t" style="left:38.4px;top:1087px;font-size:25.5px;color:#ececec;letter-spacing:0.02px;-webkit-text-stroke:0.35px;">Angelic Ambient</span>
<div class="b" style="left:6.0px;top:1118.0px;width:486.0px;height:36.0px;background:#618dc9;"></div>
<svg class="b" style="left:11.0px;top:1121.5px;" width="22" height="24" viewBox="0 0 22 24" fill="none" stroke-linecap="round" stroke-linejoin="round"><path d="M2.800 10.100L7 20.700L17 2.200" stroke="#fff" stroke-width="3.500" stroke-linecap="round" stroke-linejoin="round" fill="none"/></svg>
<span class="t" style="left:45.8px;top:1121px;font-size:25.5px;color:#ffffff;letter-spacing:-0.05px;-webkit-text-stroke:0.35px;">Voices</span>
<span class="t" style="left:38.4px;top:1159px;font-size:25.5px;color:#ececec;letter-spacing:0.00px;-webkit-text-stroke:0.35px;">Straylight Soundscape</span>
<div class="b" style="left:6.0px;top:1190.0px;width:486.0px;height:36.0px;background:#618dc9;"></div>
<svg class="b" style="left:11.0px;top:1193.5px;" width="22" height="24" viewBox="0 0 22 24" fill="none" stroke-linecap="round" stroke-linejoin="round"><path d="M2.800 10.100L7 20.700L17 2.200" stroke="#fff" stroke-width="3.500" stroke-linecap="round" stroke-linejoin="round" fill="none"/></svg>
<span class="t" style="left:45.8px;top:1193px;font-size:25.5px;color:#ffffff;letter-spacing:0.22px;-webkit-text-stroke:0.35px;">Horns</span>
<span class="t" style="left:38.4px;top:1231px;font-size:25.5px;color:#ececec;letter-spacing:-0.29px;-webkit-text-stroke:0.35px;">Fire Eater</span>
<span class="t" style="left:38.4px;top:1267px;font-size:25.5px;color:#ececec;letter-spacing:-0.31px;-webkit-text-stroke:0.35px;">Space Guitar</span>
<div class="b" style="left:6.0px;top:1298.0px;width:486.0px;height:36.0px;background:#618dc9;"></div>
<svg class="b" style="left:11.0px;top:1301.5px;" width="22" height="24" viewBox="0 0 22 24" fill="none" stroke-linecap="round" stroke-linejoin="round"><path d="M2.800 10.100L7 20.700L17 2.200" stroke="#fff" stroke-width="3.500" stroke-linecap="round" stroke-linejoin="round" fill="none"/></svg>
<span class="t" style="left:45.8px;top:1301px;font-size:25.5px;color:#ffffff;letter-spacing:-0.17px;-webkit-text-stroke:0.35px;">NI Noire Felt</span>
<div class="b" style="left:6.0px;top:1334.0px;width:486.0px;height:36.0px;background:#618dc9;"></div>
<svg class="b" style="left:11.0px;top:1337.5px;" width="22" height="24" viewBox="0 0 22 24" fill="none" stroke-linecap="round" stroke-linejoin="round"><path d="M2.800 10.100L7 20.700L17 2.200" stroke="#fff" stroke-width="3.500" stroke-linecap="round" stroke-linejoin="round" fill="none"/></svg>
<span class="t" style="left:45.8px;top:1337px;font-size:25.5px;color:#ffffff;letter-spacing:-0.27px;-webkit-text-stroke:0.35px;">NI Piano Colors</span>
<div class="b" style="left:6.0px;top:1370.0px;width:486.0px;height:36.0px;background:#618dc9;"></div>
<svg class="b" style="left:11.0px;top:1373.5px;" width="22" height="24" viewBox="0 0 22 24" fill="none" stroke-linecap="round" stroke-linejoin="round"><path d="M2.800 10.100L7 20.700L17 2.200" stroke="#fff" stroke-width="3.500" stroke-linecap="round" stroke-linejoin="round" fill="none"/></svg>
<span class="t" style="left:45.8px;top:1373px;font-size:25.5px;color:#ffffff;letter-spacing:-0.62px;-webkit-text-stroke:0.35px;">Bass</span>
<span class="t" style="left:38.4px;top:1411px;font-size:25.5px;color:#ececec;letter-spacing:-0.27px;-webkit-text-stroke:0.35px;">Humming Bass</span>
<span class="t" style="left:38.4px;top:1447px;font-size:25.5px;color:#ececec;letter-spacing:-0.12px;-webkit-text-stroke:0.35px;">Darkness</span>
<span class="t" style="left:38.4px;top:1483px;font-size:25.5px;color:#ececec;letter-spacing:0.06px;-webkit-text-stroke:0.35px;">Falcon Effects</span>
<span class="t" style="left:38.4px;top:1519px;font-size:25.5px;color:#ececec;letter-spacing:-0.10px;-webkit-text-stroke:0.35px;">E-Piano</span>
<span class="t" style="left:659.5px;top:1009px;font-size:22px;color:#ececec;letter-spacing:0.12px;-webkit-text-stroke:0.3px;">Settings</span>
<span class="t" style="left:891.3px;top:1009px;font-size:22px;color:#ececec;letter-spacing:-0.17px;-webkit-text-stroke:0.3px;">Chord Suggestions</span>
<span class="t" style="left:1263.3px;top:1009px;font-size:22px;color:#ececec;letter-spacing:-0.41px;-webkit-text-stroke:0.3px;">Chord Changes</span>
<span class="t" style="left:614.5px;top:1058px;font-size:22px;color:#ececec;letter-spacing:-0.71px;-webkit-text-stroke:0.3px;">Key</span>
<span class="t" style="left:545.9px;top:1101px;font-size:22px;color:#ececec;letter-spacing:-0.09px;-webkit-text-stroke:0.3px;">Transitions</span>
<span class="t" style="left:604.0px;top:1145px;font-size:22px;color:#ececec;letter-spacing:-0.25px;-webkit-text-stroke:0.3px;">Style</span>
<span class="t" style="left:550.2px;top:1189px;font-size:22px;color:#ececec;letter-spacing:-0.21px;-webkit-text-stroke:0.3px;">Resolution</span>
<span class="t" style="left:569.3px;top:1233px;font-size:22px;color:#ececec;letter-spacing:-0.02px;-webkit-text-stroke:0.3px;">Shortest</span>
<div class="b" style="left:660.0px;top:1052.4px;width:212.0px;height:39.4px;background:#363636;box-shadow:0 0 0 1px #505050 inset,0 0 0 2px #303030 inset;"></div>
<span class="t" style="left:666.5px;top:1059px;font-size:25px;color:#ffffff;letter-spacing:0.04px;-webkit-text-stroke:0.3px;">Ab.Major</span>
<div class="b" style="left:660.0px;top:1096.0px;width:211.4px;height:39.0px;background:#363636;border-radius:11px;"></div>
<span class="t" style="left:670.6px;top:1106px;font-size:23.5px;color:#ffffff;letter-spacing:-0.04px;-webkit-text-stroke:0.3px;">Keep</span>
<svg class="b" style="left:844.9px;top:1109.5px;" width="22" height="15" viewBox="0 0 22 15" fill="none" stroke-linecap="round" stroke-linejoin="round"><path d="M3 3L10.500 10.500L18 3" stroke="#fff" stroke-width="3.200"/></svg>
<div class="b" style="left:660.0px;top:1140.0px;width:211.4px;height:39.0px;background:#363636;border-radius:11px;"></div>
<span class="t" style="left:671.4px;top:1150px;font-size:23.5px;color:#ffffff;letter-spacing:-0.27px;-webkit-text-stroke:0.3px;">Generic</span>
<svg class="b" style="left:844.9px;top:1153.5px;" width="22" height="15" viewBox="0 0 22 15" fill="none" stroke-linecap="round" stroke-linejoin="round"><path d="M3 3L10.500 10.500L18 3" stroke="#fff" stroke-width="3.200"/></svg>
<div class="b" style="left:660.0px;top:1184.2px;width:131.2px;height:38.6px;background:#363636;border-radius:11px;"></div>
<span class="t" style="left:670.8px;top:1194px;font-size:23.5px;color:#ffffff;letter-spacing:0.04px;-webkit-text-stroke:0.3px;">1/32</span>
<svg class="b" style="left:764.7px;top:1196.8px;" width="22" height="15" viewBox="0 0 22 15" fill="none" stroke-linecap="round" stroke-linejoin="round"><path d="M3 3L10.500 10.500L18 3" stroke="#fff" stroke-width="3.200"/></svg>
<div class="b" style="left:660.0px;top:1228.2px;width:131.2px;height:38.8px;background:#363636;border-radius:11px;"></div>
<span class="t" style="left:670.8px;top:1238px;font-size:23.5px;color:#ffffff;letter-spacing:-0.25px;-webkit-text-stroke:0.3px;">1/2*</span>
<svg class="b" style="left:764.7px;top:1240.7px;" width="22" height="15" viewBox="0 0 22 15" fill="none" stroke-linecap="round" stroke-linejoin="round"><path d="M3 3L10.500 10.500L18 3" stroke="#fff" stroke-width="3.200"/></svg>
<div class="b" style="left:656.0px;top:1280.0px;width:214.5px;height:58.0px;background:#43648f;border-radius:9px;box-shadow:0 1px 1px rgba(0,0,0,.4);"></div>
<span class="t" style="left:706.5px;top:1300px;font-size:24px;color:#ffffff;letter-spacing:-0.22px;-webkit-text-stroke:0.3px;">Harmonize</span>
<div class="b" style="left:621.7px;top:1362.0px;width:26.3px;height:25.8px;background:#8c8c8c;border-radius:7px;"></div>
<span class="t" style="left:657.4px;top:1364px;font-size:23.5px;color:#ececec;letter-spacing:0.04px;-webkit-text-stroke:0.3px;">Complete Chords</span>
<div class="b" style="left:621.7px;top:1402.1px;width:26.3px;height:26.1px;background:#8c8c8c;border-radius:7px;"></div>
<span class="t" style="left:656.6px;top:1404px;font-size:23.5px;color:#ececec;letter-spacing:-0.17px;-webkit-text-stroke:0.3px;">Retain Harmony</span>
<div class="b" style="left:884.0px;top:1052.4px;width:367.8px;height:571.0px;background:#383838;box-shadow:0 2px 0 #2f2f2f inset;"></div>
<div class="b" style="left:886.3px;top:1054.5px;width:333.5px;height:35.5px;background:#618dc9;"></div>
<div class="b" style="left:1225.5px;top:1057.8px;width:21.0px;height:420.0px;background:#4f4f4f;border-radius:10.5px;"></div>
<div class="b" style="left:892.3px;top:1060.1px;width:2.5px;height:17.0px;background:#b6a845;"></div>
<div class="b" style="left:898.6px;top:1060.1px;width:2.5px;height:17.0px;background:#b6a845;"></div>
<div class="b" style="left:904.9px;top:1060.1px;width:2.5px;height:17.0px;background:#b6a845;"></div>
<div class="b" style="left:911.2px;top:1060.1px;width:2.5px;height:17.0px;background:#b6a845;"></div>
<div class="b" style="left:917.5px;top:1060.1px;width:2.5px;height:17.0px;background:#b6a845;"></div>
<div class="b" style="left:923.8px;top:1060.1px;width:2.5px;height:17.0px;background:#7fa457;"></div>
<div class="b" style="left:930.1px;top:1060.1px;width:2.5px;height:17.0px;background:#6b9c5a;"></div>
<div class="b" style="left:936.4px;top:1060.1px;width:2.5px;height:17.0px;background:#5a945c;"></div>
<div class="b" style="left:942.7px;top:1060.1px;width:2.5px;height:17.0px;background:#4f8f60;"></div>
<div class="b" style="left:949.0px;top:1060.1px;width:2.5px;height:17.0px;background:#6df27f;"></div>
<span class="t" style="left:989.0px;top:1058px;font-size:24.5px;color:#ffffff;letter-spacing:0.38px;-webkit-text-stroke:0.25px;">F#</span>
<div class="b" style="left:892.3px;top:1096.1px;width:2.5px;height:17.0px;background:#b6a845;"></div>
<div class="b" style="left:898.6px;top:1096.1px;width:2.5px;height:17.0px;background:#b6a845;"></div>
<div class="b" style="left:904.9px;top:1096.1px;width:2.5px;height:17.0px;background:#b6a845;"></div>
<div class="b" style="left:911.2px;top:1096.1px;width:2.5px;height:17.0px;background:#b6a845;"></div>
<div class="b" style="left:917.5px;top:1096.1px;width:2.5px;height:17.0px;background:#b6a845;"></div>
<div class="b" style="left:923.8px;top:1096.1px;width:2.5px;height:17.0px;background:#5e9a64;"></div>
<div class="b" style="left:930.1px;top:1096.1px;width:2.5px;height:17.0px;background:#4f8f60;"></div>
<span class="t" style="left:989.0px;top:1094px;font-size:24.5px;color:#ececec;letter-spacing:0.34px;-webkit-text-stroke:0.25px;">F#7</span>
<div class="b" style="left:892.3px;top:1132.1px;width:2.5px;height:17.0px;background:#b6a845;"></div>
<div class="b" style="left:898.6px;top:1132.1px;width:2.5px;height:17.0px;background:#b6a845;"></div>
<div class="b" style="left:904.9px;top:1132.1px;width:2.5px;height:17.0px;background:#b6a845;"></div>
<div class="b" style="left:911.2px;top:1132.1px;width:2.5px;height:17.0px;background:#b6a845;"></div>
<span class="t" style="left:989.0px;top:1130px;font-size:24.5px;color:#ececec;letter-spacing:-0.06px;-webkit-text-stroke:0.25px;">Ebm7</span>
<div class="b" style="left:892.3px;top:1168.1px;width:2.5px;height:17.0px;background:#b6a845;"></div>
<div class="b" style="left:898.6px;top:1168.1px;width:2.5px;height:17.0px;background:#b6a845;"></div>
<div class="b" style="left:904.9px;top:1168.1px;width:2.5px;height:17.0px;background:#b6a845;"></div>
<span class="t" style="left:991.0px;top:1166px;font-size:24.5px;color:#ececec;letter-spacing:-0.30px;-webkit-text-stroke:0.25px;">Ab7</span>
<div class="b" style="left:892.3px;top:1204.1px;width:2.5px;height:17.0px;background:#b6a845;"></div>
<div class="b" style="left:898.6px;top:1204.1px;width:2.5px;height:17.0px;background:#b6a845;"></div>
<div class="b" style="left:904.9px;top:1204.1px;width:2.5px;height:17.0px;background:#b6a845;"></div>
<span class="t" style="left:989.0px;top:1202px;font-size:24.5px;color:#ececec;letter-spacing:0.76px;-webkit-text-stroke:0.25px;">Ebm</span>
<div class="b" style="left:892.3px;top:1240.1px;width:2.5px;height:17.0px;background:#b6a845;"></div>
<div class="b" style="left:898.6px;top:1240.1px;width:2.5px;height:17.0px;background:#b6a845;"></div>
<div class="b" style="left:904.9px;top:1240.1px;width:2.5px;height:17.0px;background:#b6a845;"></div>
<span class="t" style="left:991.0px;top:1238px;font-size:24.5px;color:#ececec;letter-spacing:0.63px;-webkit-text-stroke:0.25px;">A6(add9)</span>
<span class="t" style="left:1104.4px;top:1240px;font-size:24.5px;color:#ececec;font-style:italic;letter-spacing:-0.06px;-webkit-text-stroke:0.25px;">(B.Major)</span>
<div class="b" style="left:892.3px;top:1276.1px;width:2.5px;height:17.0px;background:#b6a845;"></div>
<div class="b" style="left:898.6px;top:1276.1px;width:2.5px;height:17.0px;background:#b6a845;"></div>
<div class="b" style="left:904.9px;top:1276.1px;width:2.5px;height:17.0px;background:#b6a845;"></div>
<span class="t" style="left:989.0px;top:1274px;font-size:24.5px;color:#ececec;letter-spacing:1.52px;-webkit-text-stroke:0.25px;">B9</span>
<span class="t" style="left:1028.8px;top:1276px;font-size:24.5px;color:#ececec;font-style:italic;letter-spacing:-0.05px;-webkit-text-stroke:0.25px;">(Db.Major)</span>
<div class="b" style="left:892.3px;top:1312.1px;width:2.5px;height:17.0px;background:#b6a845;"></div>
<div class="b" style="left:898.6px;top:1312.1px;width:2.5px;height:17.0px;background:#b6a845;"></div>
<span class="t" style="left:989.0px;top:1310px;font-size:24.5px;color:#ececec;letter-spacing:0.97px;-webkit-text-stroke:0.25px;">Bbm(#5)</span>
<div class="b" style="left:892.3px;top:1348.1px;width:2.5px;height:17.0px;background:#b6a845;"></div>
<div class="b" style="left:898.6px;top:1348.1px;width:2.5px;height:17.0px;background:#b6a845;"></div>
<span class="t" style="left:989.0px;top:1346px;font-size:24.5px;color:#ececec;letter-spacing:1.02px;-webkit-text-stroke:0.25px;">Bm9</span>
<span class="t" style="left:1048.2px;top:1348px;font-size:24.5px;color:#ececec;font-style:italic;letter-spacing:-0.06px;-webkit-text-stroke:0.25px;">(F#.Minor)</span>
<div class="b" style="left:892.3px;top:1384.1px;width:2.5px;height:17.0px;background:#b6a845;"></div>
<span class="t" style="left:989.9px;top:1382px;font-size:24.5px;color:#ececec;letter-spacing:0.59px;-webkit-text-stroke:0.25px;">Cm7(b5)</span>
<div class="b" style="left:892.3px;top:1420.1px;width:2.5px;height:17.0px;background:#b6a845;"></div>
<span class="t" style="left:989.0px;top:1418px;font-size:24.5px;color:#ececec;letter-spacing:0.46px;-webkit-text-stroke:0.25px;">F#m7sus4</span>
<span class="t" style="left:1114.9px;top:1420px;font-size:24.5px;color:#ececec;font-style:italic;letter-spacing:-0.06px;-webkit-text-stroke:0.25px;">(B.Major)</span>
<div class="b" style="left:892.3px;top:1456.1px;width:2.5px;height:17.0px;background:#b6a845;"></div>
<span class="t" style="left:989.0px;top:1454px;font-size:24.5px;color:#ececec;letter-spacing:0.41px;-webkit-text-stroke:0.25px;">Bbm/F#</span>
<span class="t" style="left:1084.7px;top:1456px;font-size:24.5px;color:#ececec;font-style:italic;letter-spacing:-0.14px;-webkit-text-stroke:0.25px;">(Bb.Minor)</span>
<div class="b" style="left:892.3px;top:1492.1px;width:2.5px;height:17.0px;background:#b6a845;"></div>
<span class="t" style="left:989.0px;top:1490px;font-size:24.5px;color:#ececec;letter-spacing:1.02px;-webkit-text-stroke:0.25px;">F#6</span>
<div class="b" style="left:892.3px;top:1528.1px;width:2.5px;height:17.0px;background:#b6a845;"></div>
<span class="t" style="left:989.0px;top:1526px;font-size:24.5px;color:#ececec;letter-spacing:0.28px;-webkit-text-stroke:0.25px;">B7sus2</span>
<span class="t" style="left:1081.1px;top:1528px;font-size:24.5px;color:#ececec;font-style:italic;letter-spacing:-0.05px;-webkit-text-stroke:0.25px;">(Db.Major)</span>
<div class="b" style="left:892.3px;top:1564.1px;width:2.5px;height:17.0px;background:#b6a845;"></div>
<span class="t" style="left:989.0px;top:1562px;font-size:24.5px;color:#ececec;letter-spacing:0.76px;-webkit-text-stroke:0.25px;">Dbsus4</span>
<span class="t" style="left:989.0px;top:1598px;font-size:24.5px;color:#ececec;letter-spacing:0.64px;-webkit-text-stroke:0.25px;">Db/F#</span>
<span class="t" style="left:1064.6px;top:1600px;font-size:24.5px;color:#ececec;font-style:italic;letter-spacing:-0.14px;-webkit-text-stroke:0.25px;">(Bb.Minor)</span>
<div class="b" style="left:1264.3px;top:1052.4px;width:106.0px;height:45.6px;background:#43648f;border-radius:9px;box-shadow:0 1px 1px rgba(0,0,0,.4);"></div>
<div class="b" style="left:1376.2px;top:1052.4px;width:102.0px;height:45.6px;background:#43648f;border-radius:9px;box-shadow:0 1px 1px rgba(0,0,0,.4);"></div>
<svg class="b" style="left:1309.0px;top:1069.0px;" width="18" height="18" viewBox="0 0 18 18" fill="none" stroke-linecap="round" stroke-linejoin="round"><path d="M9 2V16M2 9H16" stroke="#fff" stroke-width="2"/></svg>
<svg class="b" style="left:1421.0px;top:1074.0px;" width="14" height="8" viewBox="0 0 14 8" fill="none" stroke-linecap="round" stroke-linejoin="round"><path d="M3 4H11" stroke="#fff" stroke-width="2.200"/></svg>
<div class="b" style="left:1270.3px;top:1122.0px;width:25.7px;height:25.5px;background:#8c8c8c;border-radius:7px;"></div>
<span class="t" style="left:1304.6px;top:1124px;font-size:23.5px;color:#ececec;letter-spacing:0.27px;-webkit-text-stroke:0.3px;">Match Neighborhood</span>
<div class="b" style="left:1270.3px;top:1158.5px;width:25.7px;height:25.5px;background:#41699f;border-radius:7px;"></div>
<svg class="b" style="left:1272.0px;top:1159.0px;" width="24" height="26" viewBox="0 0 24 26" fill="none" stroke-linecap="round" stroke-linejoin="round"><path d="M5.500 14L10.500 21.500L19 4.500" stroke="#fff" stroke-width="3.600" stroke-linecap="round" stroke-linejoin="round" fill="none"/></svg>
<span class="t" style="left:1305.5px;top:1160px;font-size:23.5px;color:#ececec;letter-spacing:-0.04px;-webkit-text-stroke:0.3px;">Optimize Scales</span>
<div class="b" style="left:1264.3px;top:1272.5px;width:214.0px;height:57.5px;background:#43648f;border-radius:9px;box-shadow:0 1px 1px rgba(0,0,0,.4);"></div>
<svg class="b" style="left:1319.0px;top:1286.0px;" width="30" height="30" viewBox="0 0 30 30" fill="none" stroke-linecap="round" stroke-linejoin="round"><path d="M15 2V20M7.500 13L15 20.500L22.500 13" stroke="#fff" stroke-width="1.700"/><path d="M3 27H27" stroke="#fff" stroke-width="2" stroke-dasharray="0.100 5.900"/></svg>
<span class="t" style="left:1361.0px;top:1291px;font-size:25.5px;color:#ffffff;letter-spacing:-0.24px;-webkit-text-stroke:0.3px;">Apply</span>
<span class="t" style="left:2149.0px;top:996px;font-size:24.5px;color:#a2a2a2;letter-spacing:0.31px;">Preview Mix</span>
<div class="b" style="left:2120.0px;top:1024.0px;width:176.0px;height:312.0px;background:#515151;border-radius:13px;"></div>
<span class="t" style="left:2142.8px;top:1041px;font-size:22px;color:#ffffff;-webkit-text-stroke:0.3px;">M</span>
<span class="t" style="left:2199.5px;top:1041px;font-size:22px;color:#ffffff;-webkit-text-stroke:0.3px;">C</span>
<span class="t" style="left:2248.9px;top:1041px;font-size:22px;color:#ffffff;-webkit-text-stroke:0.3px;">B</span>
<div class="b" style="left:2154.0px;top:1088.0px;width:7.6px;height:174.5px;background:linear-gradient(90deg,#3e3e3e 55%,#4a4a4a);"></div>
<div class="b" style="left:2206.0px;top:1088.0px;width:7.6px;height:174.5px;background:linear-gradient(90deg,#3e3e3e 55%,#4a4a4a);"></div>
<div class="b" style="left:2258.3px;top:1088.0px;width:7.6px;height:174.5px;background:linear-gradient(90deg,#3e3e3e 55%,#4a4a4a);"></div>
<div class="b" style="left:2143.8px;top:1107.6px;width:28.4px;height:44.4px;background:linear-gradient(#b4b4b4,#e2e2e2 30%,#f4f4f4 76%,#9a9a9a 79%,#c4c4c4);box-shadow:0 1px 2px rgba(0,0,0,.4);"></div>
<div class="b" style="left:2149.8px;top:1115.5px;width:15.0px;height:1.0px;background:#a8a8a8;"></div>
<div class="b" style="left:2149.8px;top:1123.5px;width:15.0px;height:1.0px;background:#a8a8a8;"></div>
<div class="b" style="left:2149.8px;top:1131.5px;width:15.0px;height:1.0px;background:#a8a8a8;"></div>
<div class="b" style="left:2149.8px;top:1139.5px;width:15.0px;height:1.0px;background:#a8a8a8;"></div>
<div class="b" style="left:2195.7px;top:1107.6px;width:28.4px;height:44.4px;background:linear-gradient(#b4b4b4,#e2e2e2 30%,#f4f4f4 76%,#9a9a9a 79%,#c4c4c4);box-shadow:0 1px 2px rgba(0,0,0,.4);"></div>
<div class="b" style="left:2201.7px;top:1115.5px;width:15.0px;height:1.0px;background:#a8a8a8;"></div>
<div class="b" style="left:2201.7px;top:1123.5px;width:15.0px;height:1.0px;background:#a8a8a8;"></div>
<div class="b" style="left:2201.7px;top:1131.5px;width:15.0px;height:1.0px;background:#a8a8a8;"></div>
<div class="b" style="left:2201.7px;top:1139.5px;width:15.0px;height:1.0px;background:#a8a8a8;"></div>
<div class="b" style="left:2248.0px;top:1107.6px;width:28.4px;height:44.4px;background:linear-gradient(#b4b4b4,#e2e2e2 30%,#f4f4f4 76%,#9a9a9a 79%,#c4c4c4);box-shadow:0 1px 2px rgba(0,0,0,.4);"></div>
<div class="b" style="left:2254.0px;top:1115.5px;width:15.0px;height:1.0px;background:#a8a8a8;"></div>
<div class="b" style="left:2254.0px;top:1123.5px;width:15.0px;height:1.0px;background:#a8a8a8;"></div>
<div class="b" style="left:2254.0px;top:1131.5px;width:15.0px;height:1.0px;background:#a8a8a8;"></div>
<div class="b" style="left:2254.0px;top:1139.5px;width:15.0px;height:1.0px;background:#a8a8a8;"></div>
<div class="b" style="left:2135.7px;top:1283.8px;width:146.4px;height:38.2px;background:#43648f;border-radius:9px;box-shadow:0 1px 1px rgba(0,0,0,.4);"></div>
<span class="t" style="left:2179.4px;top:1294px;font-size:23.5px;color:#ffffff;letter-spacing:0.00px;-webkit-text-stroke:0.3px;">Setup</span>
<div class="b" style="left:4.0px;top:1640.0px;width:2108.0px;height:156.0px;background:#404040;"></div>
<div class="b" style="left:40.0px;top:1641.8px;width:2036.2px;height:152.2px;background:#ffffff;"></div>
<div class="b" style="left:5.0px;top:1641.0px;width:34.6px;height:154.0px;background:linear-gradient(#686b6a,#4a4a4a 45%,#2d2d2d);"></div>
<div class="b" style="left:2077.2px;top:1641.0px;width:33.8px;height:154.0px;background:linear-gradient(#686b6a,#4a4a4a 45%,#2d2d2d);"></div>
<span class="t" style="left:7.4px;top:1707px;font-size:25px;color:#ffffff;-webkit-text-stroke:0.4px;">&lt;</span>
<span class="t" style="left:2079.3px;top:1707px;font-size:25px;color:#ffffff;-webkit-text-stroke:0.4px;">&gt;</span>
<div class="b" style="left:74.0px;top:1641.8px;width:2.0px;height:152.2px;background:#404040;"></div>
<div class="b" style="left:110.0px;top:1641.8px;width:2.0px;height:152.2px;background:#404040;"></div>
<div class="b" style="left:146.0px;top:1641.8px;width:2.0px;height:152.2px;background:#404040;"></div>
<div class="b" style="left:182.0px;top:1641.8px;width:2.0px;height:152.2px;background:#404040;"></div>
<div class="b" style="left:218.0px;top:1641.8px;width:2.0px;height:152.2px;background:#404040;"></div>
<div class="b" style="left:254.0px;top:1641.8px;width:2.0px;height:152.2px;background:#404040;"></div>
<div class="b" style="left:290.0px;top:1641.8px;width:2.0px;height:152.2px;background:#404040;"></div>
<div class="b" style="left:326.0px;top:1641.8px;width:2.0px;height:152.2px;background:#404040;"></div>
<div class="b" style="left:362.0px;top:1641.8px;width:2.0px;height:152.2px;background:#404040;"></div>
<div class="b" style="left:398.0px;top:1641.8px;width:2.0px;height:152.2px;background:#404040;"></div>
<div class="b" style="left:434.0px;top:1641.8px;width:2.0px;height:152.2px;background:#404040;"></div>
<div class="b" style="left:470.0px;top:1641.8px;width:2.0px;height:152.2px;background:#404040;"></div>
<div class="b" style="left:506.0px;top:1641.8px;width:2.0px;height:152.2px;background:#404040;"></div>
<div class="b" style="left:542.0px;top:1641.8px;width:2.0px;height:152.2px;background:#404040;"></div>
<div class="b" style="left:578.0px;top:1641.8px;width:2.0px;height:152.2px;background:#404040;"></div>
<div class="b" style="left:614.0px;top:1641.8px;width:2.0px;height:152.2px;background:#404040;"></div>
<div class="b" style="left:650.0px;top:1641.8px;width:2.0px;height:152.2px;background:#404040;"></div>
<div class="b" style="left:686.0px;top:1641.8px;width:2.0px;height:152.2px;background:#404040;"></div>
<div class="b" style="left:722.0px;top:1641.8px;width:2.0px;height:152.2px;background:#404040;"></div>
<div class="b" style="left:758.0px;top:1641.8px;width:2.0px;height:152.2px;background:#404040;"></div>
<div class="b" style="left:794.0px;top:1641.8px;width:2.0px;height:152.2px;background:#404040;"></div>
<div class="b" style="left:830.0px;top:1641.8px;width:2.0px;height:152.2px;background:#404040;"></div>
<div class="b" style="left:866.0px;top:1641.8px;width:2.0px;height:152.2px;background:#404040;"></div>
<div class="b" style="left:902.0px;top:1641.8px;width:2.0px;height:152.2px;background:#404040;"></div>
<div class="b" style="left:938.0px;top:1641.8px;width:2.0px;height:152.2px;background:#404040;"></div>
<div class="b" style="left:974.0px;top:1641.8px;width:2.0px;height:152.2px;background:#404040;"></div>
<div class="b" style="left:1010.0px;top:1641.8px;width:2.0px;height:152.2px;background:#404040;"></div>
<div class="b" style="left:1046.0px;top:1641.8px;width:2.0px;height:152.2px;background:#404040;"></div>
<div class="b" style="left:1082.0px;top:1641.8px;width:2.0px;height:152.2px;background:#404040;"></div>
<div class="b" style="left:1118.0px;top:1641.8px;width:2.0px;height:152.2px;background:#404040;"></div>
<div class="b" style="left:1154.0px;top:1641.8px;width:2.0px;height:152.2px;background:#404040;"></div>
<div class="b" style="left:1190.0px;top:1641.8px;width:2.0px;height:152.2px;background:#404040;"></div>
<div class="b" style="left:1226.0px;top:1641.8px;width:2.0px;height:152.2px;background:#404040;"></div>
<div class="b" style="left:1262.0px;top:1641.8px;width:2.0px;height:152.2px;background:#404040;"></div>
<div class="b" style="left:1298.0px;top:1641.8px;width:2.0px;height:152.2px;background:#404040;"></div>
<div class="b" style="left:1334.0px;top:1641.8px;width:2.0px;height:152.2px;background:#404040;"></div>
<div class="b" style="left:1370.0px;top:1641.8px;width:2.0px;height:152.2px;background:#404040;"></div>
<div class="b" style="left:1406.0px;top:1641.8px;width:2.0px;height:152.2px;background:#404040;"></div>
<div class="b" style="left:1442.0px;top:1641.8px;width:2.0px;height:152.2px;background:#404040;"></div>
<div class="b" style="left:1478.0px;top:1641.8px;width:2.0px;height:152.2px;background:#404040;"></div>
<div class="b" style="left:1514.0px;top:1641.8px;width:2.0px;height:152.2px;background:#404040;"></div>
<div class="b" style="left:1550.0px;top:1641.8px;width:2.0px;height:152.2px;background:#404040;"></div>
<div class="b" style="left:1586.0px;top:1641.8px;width:2.0px;height:152.2px;background:#404040;"></div>
<div class="b" style="left:1622.0px;top:1641.8px;width:2.0px;height:152.2px;background:#404040;"></div>
<div class="b" style="left:1658.0px;top:1641.8px;width:2.0px;height:152.2px;background:#404040;"></div>
<div class="b" style="left:1694.0px;top:1641.8px;width:2.0px;height:152.2px;background:#404040;"></div>
<div class="b" style="left:1730.0px;top:1641.8px;width:2.0px;height:152.2px;background:#404040;"></div>
<div class="b" style="left:1766.0px;top:1641.8px;width:2.0px;height:152.2px;background:#404040;"></div>
<div class="b" style="left:1802.0px;top:1641.8px;width:2.0px;height:152.2px;background:#404040;"></div>
<div class="b" style="left:1838.0px;top:1641.8px;width:2.0px;height:152.2px;background:#404040;"></div>
<div class="b" style="left:1874.0px;top:1641.8px;width:2.0px;height:152.2px;background:#404040;"></div>
<div class="b" style="left:1910.0px;top:1641.8px;width:2.0px;height:152.2px;background:#404040;"></div>
<div class="b" style="left:1946.0px;top:1641.8px;width:2.0px;height:152.2px;background:#404040;"></div>
<div class="b" style="left:1982.0px;top:1641.8px;width:2.0px;height:152.2px;background:#404040;"></div>
<div class="b" style="left:2018.0px;top:1641.8px;width:2.0px;height:152.2px;background:#404040;"></div>
<div class="b" style="left:2054.0px;top:1641.8px;width:2.0px;height:152.2px;background:#404040;"></div>
<div class="b" style="left:64.0px;top:1640.0px;width:24.0px;height:99.8px;background:#000000;"></div>
<div class="b" style="left:100.0px;top:1640.0px;width:24.0px;height:99.8px;background:#000000;"></div>
<div class="b" style="left:172.0px;top:1640.0px;width:24.0px;height:99.8px;background:#000000;"></div>
<div class="b" style="left:208.0px;top:1640.0px;width:24.0px;height:99.8px;background:#000000;"></div>
<div class="b" style="left:244.0px;top:1640.0px;width:24.0px;height:99.8px;background:#000000;"></div>
<div class="b" style="left:316.0px;top:1640.0px;width:24.0px;height:99.8px;background:#000000;"></div>
<div class="b" style="left:352.0px;top:1640.0px;width:24.0px;height:99.8px;background:#000000;"></div>
<div class="b" style="left:424.0px;top:1640.0px;width:24.0px;height:99.8px;background:#84697c;"></div>
<div class="b" style="left:460.0px;top:1640.0px;width:24.0px;height:99.8px;background:#000000;"></div>
<div class="b" style="left:496.0px;top:1640.0px;width:24.0px;height:99.8px;background:#000000;"></div>
<div class="b" style="left:568.0px;top:1640.0px;width:24.0px;height:99.8px;background:#000000;"></div>
<div class="b" style="left:604.0px;top:1640.0px;width:24.0px;height:99.8px;background:#000000;"></div>
<div class="b" style="left:676.0px;top:1640.0px;width:24.0px;height:99.8px;background:#000000;"></div>
<div class="b" style="left:712.0px;top:1640.0px;width:24.0px;height:99.8px;background:#000000;"></div>
<div class="b" style="left:748.0px;top:1640.0px;width:24.0px;height:99.8px;background:#6b9f7f;"></div>
<div class="b" style="left:820.0px;top:1640.0px;width:24.0px;height:99.8px;background:#6f8878;"></div>
<div class="b" style="left:856.0px;top:1640.0px;width:24.0px;height:99.8px;background:#000000;"></div>
<div class="b" style="left:928.0px;top:1640.0px;width:24.0px;height:99.8px;background:#6f8878;"></div>
<div class="b" style="left:964.0px;top:1640.0px;width:24.0px;height:99.8px;background:#000000;"></div>
<div class="b" style="left:1000.0px;top:1640.0px;width:24.0px;height:99.8px;background:#000000;"></div>
<div class="b" style="left:1072.0px;top:1640.0px;width:24.0px;height:99.8px;background:#000000;"></div>
<div class="b" style="left:1108.0px;top:1640.0px;width:24.0px;height:99.8px;background:#000000;"></div>
<div class="b" style="left:1180.0px;top:1640.0px;width:24.0px;height:99.8px;background:#000000;"></div>
<div class="b" style="left:1216.0px;top:1640.0px;width:24.0px;height:99.8px;background:#000000;"></div>
<div class="b" style="left:1252.0px;top:1640.0px;width:24.0px;height:99.8px;background:#000000;"></div>
<div class="b" style="left:1324.0px;top:1640.0px;width:24.0px;height:99.8px;background:#000000;"></div>
<div class="b" style="left:1360.0px;top:1640.0px;width:24.0px;height:99.8px;background:#000000;"></div>
<div class="b" style="left:1432.0px;top:1640.0px;width:24.0px;height:99.8px;background:#000000;"></div>
<div class="b" style="left:1468.0px;top:1640.0px;width:24.0px;height:99.8px;background:#000000;"></div>
<div class="b" style="left:1504.0px;top:1640.0px;width:24.0px;height:99.8px;background:#000000;"></div>
<div class="b" style="left:1576.0px;top:1640.0px;width:24.0px;height:99.8px;background:#000000;"></div>
<div class="b" style="left:1612.0px;top:1640.0px;width:24.0px;height:99.8px;background:#000000;"></div>
<div class="b" style="left:1684.0px;top:1640.0px;width:24.0px;height:99.8px;background:#000000;"></div>
<div class="b" style="left:1720.0px;top:1640.0px;width:24.0px;height:99.8px;background:#000000;"></div>
<div class="b" style="left:1756.0px;top:1640.0px;width:24.0px;height:99.8px;background:#000000;"></div>
<div class="b" style="left:1828.0px;top:1640.0px;width:24.0px;height:99.8px;background:#000000;"></div>
<div class="b" style="left:1864.0px;top:1640.0px;width:24.0px;height:99.8px;background:#000000;"></div>
<div class="b" style="left:1936.0px;top:1640.0px;width:24.0px;height:99.8px;background:#000000;"></div>
<div class="b" style="left:1972.0px;top:1640.0px;width:24.0px;height:99.8px;background:#000000;"></div>
<div class="b" style="left:2008.0px;top:1640.0px;width:24.0px;height:99.8px;background:#000000;"></div>
<div class="b" style="left:806.0px;top:1760.0px;width:1.6px;height:21.5px;background:#000;"></div>
<svg class="b" style="left:2123.8px;top:1640.9px;" width="24" height="24" viewBox="0 0 24 24" fill="none" stroke-linecap="round" stroke-linejoin="round"><circle cx="12" cy="12" r="9.800" stroke="#ffffff" stroke-width="1.5"/><path d="M8.500 8.500L15.500 15.500M15.500 8.500L8.500 15.500" stroke="#ffffff" stroke-width="1.500"/></svg>
<div class="b" style="left:2122.0px;top:1694.0px;width:26.0px;height:26.0px;background:#8c8c8c;border-radius:7px;"></div>
<span class="t" style="left:2157.5px;top:1695px;font-size:23.5px;color:#ececec;letter-spacing:-0.35px;-webkit-text-stroke:0.3px;">Scales</span>
<div class="b" style="left:2122.0px;top:1726.0px;width:26.0px;height:26.0px;background:#8c8c8c;border-radius:7px;"></div>
<span class="t" style="left:2158.5px;top:1727px;font-size:23.5px;color:#ececec;letter-spacing:-0.11px;-webkit-text-stroke:0.3px;">All Octaves</span>
<div class="b" style="left:2122.0px;top:1758.0px;width:26.0px;height:26.0px;background:#8c8c8c;border-radius:7px;"></div>
<span class="t" style="left:2156.6px;top:1759px;font-size:23.5px;color:#ececec;letter-spacing:-0.10px;-webkit-text-stroke:0.3px;">MIDI Input</span>
</div></body></html>
